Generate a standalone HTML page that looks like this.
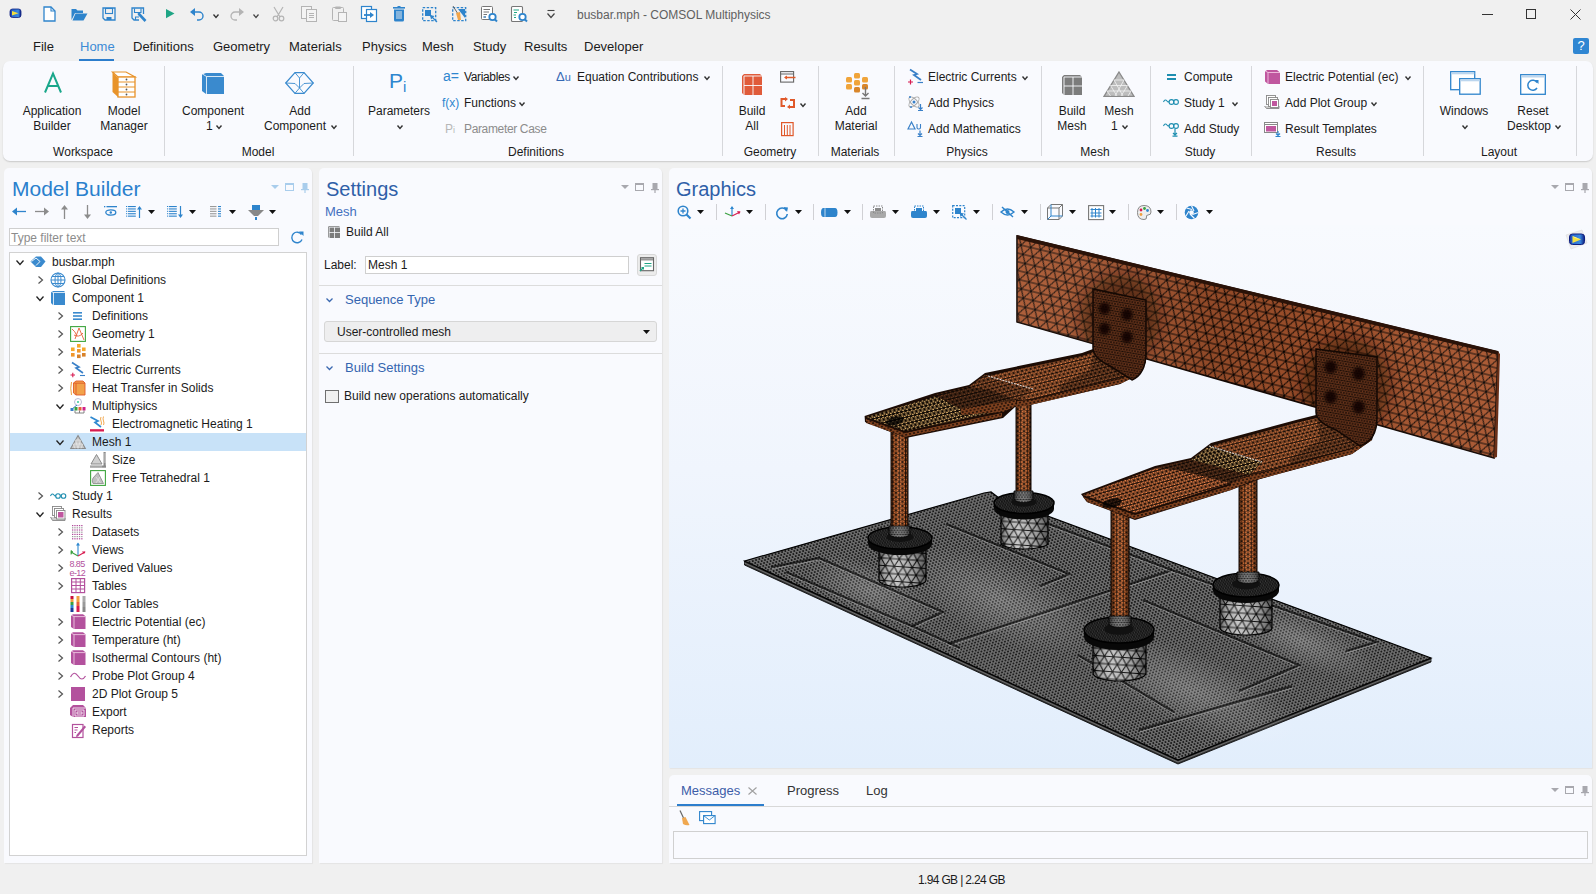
<!DOCTYPE html>
<html><head><meta charset="utf-8">
<style>
*{box-sizing:border-box;margin:0;padding:0}
html,body{width:1596px;height:894px;overflow:hidden;background:#f0f0f0;font-family:"Liberation Sans",sans-serif;color:#1b1b1b;font-size:12px}
.a{position:absolute;white-space:nowrap}
.panel{position:absolute;background:#f9fafe;border-radius:5px 5px 0 0;box-shadow:1px 1px 1px rgba(0,0,0,0.05)}
svg{position:absolute;overflow:visible}
</style></head><body>

<svg style="left:8px;top:8px" width="14" height="11" viewBox="0 0 14 11"><defs><linearGradient id="ag" x1="0" y1="0" x2="1" y2="0"><stop offset="0" stop-color="#1a2f9a"/><stop offset="0.25" stop-color="#2a6ad0"/><stop offset="0.75" stop-color="#3a8ae0"/><stop offset="1" stop-color="#0e1f80"/></linearGradient></defs><rect x="2" y="1" width="11" height="8.5" rx="2.5" fill="url(#ag)" stroke="#0e1f80" stroke-width="0.8"/><path d="M4 3 L10.5 5.3 L4 7.6 Z" fill="#f4e040"/></svg>
<svg style="left:43px;top:6px" width="13" height="16" viewBox="0 0 13 16"><path d="M1 1 H8 L12 5 V15 H1 Z" fill="#fff" stroke="#2e84cc" stroke-width="1.3"/><path d="M8 1 V5 H12" fill="none" stroke="#2e84cc" stroke-width="1.1"/></svg>
<svg style="left:71px;top:8px" width="17" height="13" viewBox="0 0 17 13"><path d="M0.5 1 H5 L6.5 2.5 H12 V5 H4 L0.5 12 Z" fill="#2e84cc"/><path d="M4.5 5.5 H16.5 L12.5 12.5 H1.5 Z" fill="#2e84cc"/></svg>
<svg style="left:102px;top:7px" width="14" height="14" viewBox="0 0 14 14"><path d="M1 1 H13 V13 H3 L1 11 Z" fill="none" stroke="#2e84cc" stroke-width="1.3"/><rect x="3.5" y="1.5" width="7" height="5" fill="none" stroke="#2e84cc" stroke-width="1.1"/><rect x="4.5" y="10" width="5" height="3" fill="#2e84cc"/></svg>
<svg style="left:131px;top:7px" width="16" height="16" viewBox="0 0 16 16"><path d="M12.5 7 V1 H1 V11 L3 13 H8" fill="none" stroke="#2e84cc" stroke-width="1.3"/><path d="M3.5 1.5 V5.5 H10 V1.5" fill="none" stroke="#2e84cc" stroke-width="1.1"/><path d="M4.5 13 V10 H8" fill="none" stroke="#2e84cc" stroke-width="1.1"/><path d="M7.5 6.5 L14.5 14" stroke="#2e84cc" stroke-width="2.6"/><path d="M6.5 5.5 L8.5 6.8 L7.2 8 Z" fill="#2e84cc"/></svg>
<svg style="left:166px;top:9px" width="9" height="10" viewBox="0 0 9 10"><path d="M0 0 L8.5 4.6 L0 9.2 Z" fill="#1fa585"/></svg>
<svg style="left:190px;top:8px" width="15" height="13" viewBox="0 0 15 13"><path d="M0 4 L5 0 V8 Z" fill="#2e84cc"/><path d="M4 4 H9 A4 4 0 0 1 9 12 H7" fill="none" stroke="#2e84cc" stroke-width="1.4"/></svg>
<svg style="left:213px;top:14px" width="6" height="4" viewBox="0 0 6 4"><path d="M0.5 0.5 L3.0 3.5 L5.5 0.5" fill="none" stroke="#333" stroke-width="1.3"/></svg>
<svg style="left:230px;top:8px" width="15" height="13" viewBox="0 0 15 13"><path d="M14 4 L9 0 V8 Z" fill="#b4b4b4"/><path d="M10 4 H5 A4 4 0 0 0 5 12 H7" fill="none" stroke="#b4b4b4" stroke-width="1.3"/></svg>
<svg style="left:253px;top:14px" width="6" height="4" viewBox="0 0 6 4"><path d="M0.5 0.5 L3.0 3.5 L5.5 0.5" fill="none" stroke="#444" stroke-width="1.2"/></svg>
<svg style="left:272px;top:6px" width="13" height="16" viewBox="0 0 13 16"><path d="M2 1 L8 11 M11 1 L5 11" stroke="#b4b4b4" stroke-width="1.2"/><circle cx="3.5" cy="12.5" r="2.3" fill="none" stroke="#b4b4b4" stroke-width="1.2"/><circle cx="9.5" cy="12.5" r="2.3" fill="none" stroke="#b4b4b4" stroke-width="1.2"/></svg>
<svg style="left:301px;top:6px" width="16" height="16" viewBox="0 0 16 16"><rect x="0.5" y="0.5" width="10" height="12" fill="#f4f4f4" stroke="#b4b4b4"/><rect x="5.5" y="3.5" width="10" height="12" fill="#f4f4f4" stroke="#b4b4b4"/><path d="M8 7.5 H13 M8 9.5 H13 M8 11.5 H13" stroke="#b4b4b4"/></svg>
<svg style="left:332px;top:6px" width="15" height="16" viewBox="0 0 15 16"><rect x="0.5" y="1.5" width="11" height="13" rx="1" fill="none" stroke="#b4b4b4"/><rect x="3" y="0.5" width="6" height="2.5" rx="1" fill="#b4b4b4"/><rect x="6.5" y="6.5" width="8" height="9" fill="#f4f4f4" stroke="#b4b4b4"/></svg>
<svg style="left:361px;top:6px" width="16" height="16" viewBox="0 0 16 16"><rect x="0.5" y="0.5" width="10" height="12" fill="#fff" stroke="#2e84cc" stroke-width="1.2"/><rect x="5.5" y="3.5" width="10" height="12" fill="#fff" stroke="#2e84cc" stroke-width="1.2"/><path d="M3 9 H10" stroke="#2e84cc" stroke-width="1.8"/><path d="M9 6 L13 9 L9 12 Z" fill="#2e84cc"/></svg>
<svg style="left:393px;top:6px" width="12" height="16" viewBox="0 0 12 16"><rect x="0" y="1" width="12" height="1.6" fill="#2e84cc"/><rect x="4.5" y="0" width="3" height="1.5" fill="#2e84cc"/><path d="M1 3.5 H11 V14 Q11 15.5 9.5 15.5 H2.5 Q1 15.5 1 14 Z" fill="#2e84cc"/><path d="M4 5 V13 M6 5 V13 M8 5 V13" stroke="#f0f0f0" stroke-width="0.9"/></svg>
<svg style="left:422px;top:7px" width="16" height="15" viewBox="0 0 16 15"><rect x="0.7" y="0.7" width="13" height="13" fill="none" stroke="#2e84cc" stroke-width="1.3" stroke-dasharray="2.5 1.5"/><rect x="3" y="3" width="6" height="6" fill="#2e84cc"/><path d="M8 8 L15 15" stroke="#2e84cc" stroke-width="1.3"/><path d="M8 8 L12.5 9 L9 12.5 Z" fill="#2e84cc"/></svg>
<svg style="left:452px;top:6px" width="15" height="16" viewBox="0 0 15 16"><rect x="0.7" y="1.7" width="13" height="13" fill="none" stroke="#2e84cc" stroke-width="1.3" stroke-dasharray="2.5 1.5"/><path d="M6 3 L13 3 L13 12 Z" fill="#2e84cc"/><path d="M1 0 L6 8" stroke="#666" stroke-width="1"/><path d="M4 7 L8 6 L9 14 L6 14 Z" fill="#f2a64a"/></svg>
<svg style="left:481px;top:6px" width="17" height="17" viewBox="0 0 17 17"><rect x="0.5" y="0.5" width="11" height="13" rx="1" fill="#fff" stroke="#777"/><path d="M2.5 3.5 H9 M2.5 6 H8 M2.5 8.5 H6 M2.5 11 H5" stroke="#777"/><path d="M2.5 11 H5" stroke="#2e84cc"/><circle cx="11.5" cy="11" r="3.2" fill="#fff" stroke="#2e84cc" stroke-width="1.8"/><path d="M13.5 13 L16 15.5" stroke="#2e84cc" stroke-width="2"/></svg>
<svg style="left:511px;top:6px" width="17" height="17" viewBox="0 0 17 17"><rect x="0.5" y="0.5" width="11" height="15" rx="1" fill="#fff" stroke="#777" stroke-width="1.1"/><path d="M2.5 4 H8 " stroke="#1fa585"/><path d="M3 6.5 H6 M2.5 9 H5 M3 11.5 H5" stroke="#1fa585"/><circle cx="11.5" cy="11" r="3.2" fill="#fff" stroke="#2e84cc" stroke-width="1.8"/><path d="M13.5 13 L16 15.5" stroke="#2e84cc" stroke-width="2"/></svg>
<svg style="left:547px;top:10px" width="8" height="9" viewBox="0 0 8 9"><path d="M0.5 0.5 H7.5" stroke="#444" stroke-width="1.1"/><path d="M0.5 3.5 L4 7.5 L7.5 3.5" fill="none" stroke="#444" stroke-width="1.2"/></svg>
<div class="a" style="left:577px;top:7px;font-size:12px;line-height:16px;color:#606060;">busbar.mph - COMSOL Multiphysics</div>
<div class="a" style="left:1482px;top:14px;width:11px;height:1px;background:#333;"></div>
<div class="a" style="left:1526px;top:9px;width:10px;height:10px;border:1px solid #333"></div>
<svg style="left:1570px;top:9px" width="11" height="11" viewBox="0 0 11 11"><path d="M0.5 0.5 L10.5 10.5 M10.5 0.5 L0.5 10.5" stroke="#333" stroke-width="1"/></svg>
<div class="a" style="left:33px;top:39px;font-size:13px;line-height:16px;color:#1b1b1b;">File</div>
<div class="a" style="left:133px;top:39px;font-size:13px;line-height:16px;color:#1b1b1b;">Definitions</div>
<div class="a" style="left:213px;top:39px;font-size:13px;line-height:16px;color:#1b1b1b;">Geometry</div>
<div class="a" style="left:289px;top:39px;font-size:13px;line-height:16px;color:#1b1b1b;">Materials</div>
<div class="a" style="left:362px;top:39px;font-size:13px;line-height:16px;color:#1b1b1b;">Physics</div>
<div class="a" style="left:422px;top:39px;font-size:13px;line-height:16px;color:#1b1b1b;">Mesh</div>
<div class="a" style="left:473px;top:39px;font-size:13px;line-height:16px;color:#1b1b1b;">Study</div>
<div class="a" style="left:524px;top:39px;font-size:13px;line-height:16px;color:#1b1b1b;">Results</div>
<div class="a" style="left:584px;top:39px;font-size:13px;line-height:16px;color:#1b1b1b;">Developer</div>
<div class="a" style="left:80px;top:39px;font-size:13px;line-height:16px;color:#3c8bd6;">Home</div>
<div class="a" style="left:79px;top:59px;width:35px;height:3px;background:#2d7ecd;"></div>
<div class="a" style="left:1573px;top:38px;width:16px;height:16px;background:#2f86d2;border-radius:2px;color:#fff;font-size:13px;line-height:16px;text-align:center">?</div>
<div class="a" style="left:3px;top:61px;width:1590px;height:100px;background:#f9fafe;border-radius:7px;box-shadow:0 1px 1.5px rgba(0,0,0,0.16)"></div>
<div class="a" style="left:164px;top:66px;width:1px;height:90px;background:#d6d7db;"></div>
<div class="a" style="left:353px;top:66px;width:1px;height:90px;background:#d6d7db;"></div>
<div class="a" style="left:722px;top:66px;width:1px;height:90px;background:#d6d7db;"></div>
<div class="a" style="left:818px;top:66px;width:1px;height:90px;background:#d6d7db;"></div>
<div class="a" style="left:894px;top:66px;width:1px;height:90px;background:#d6d7db;"></div>
<div class="a" style="left:1041px;top:66px;width:1px;height:90px;background:#d6d7db;"></div>
<div class="a" style="left:1150px;top:66px;width:1px;height:90px;background:#d6d7db;"></div>
<div class="a" style="left:1251px;top:66px;width:1px;height:90px;background:#d6d7db;"></div>
<div class="a" style="left:1423px;top:66px;width:1px;height:90px;background:#d6d7db;"></div>
<div class="a" style="left:1576px;top:66px;width:1px;height:90px;background:#d6d7db;"></div>
<svg style="left:44px;top:73px" width="18" height="20" viewBox="0 0 18 20"><path d="M1 19.5 L9 0.5 L17 19.5 M4 13 H14" fill="none" stroke="#1aa78b" stroke-width="2"/></svg>
<svg style="left:112px;top:71px" width="24" height="27" viewBox="0 0 24 27"><path d="M0.5 1 L6 7 V26 L0.5 21 Z" fill="#e8932a"/><path d="M0.5 1 H14 L23 6 H6 Z" fill="#fff" stroke="#e8932a" stroke-width="1.2"/><rect x="6" y="6" width="17" height="20" fill="#fff" stroke="#e8932a" stroke-width="1.3"/><path d="M6 11 H23 M6 16 H23 M6 21 H23" stroke="#e8932a" stroke-width="1.2"/><circle cx="14.5" cy="8.5" r="0.9" fill="#555"/><circle cx="14.5" cy="13.5" r="0.9" fill="#555"/><circle cx="14.5" cy="18.5" r="0.9" fill="#555"/><circle cx="14.5" cy="23.5" r="0.9" fill="#555"/></svg>
<div class="a" style="left:-48px;width:200px;text-align:center;top:103px;font-size:12px;line-height:16px;">Application</div>
<div class="a" style="left:-48px;width:200px;text-align:center;top:118px;font-size:12px;line-height:16px;">Builder</div>
<div class="a" style="left:24px;width:200px;text-align:center;top:103px;font-size:12px;line-height:16px;">Model</div>
<div class="a" style="left:24px;width:200px;text-align:center;top:118px;font-size:12px;line-height:16px;">Manager</div>
<div class="a" style="left:-17px;width:200px;text-align:center;top:144px;font-size:12px;line-height:16px;">Workspace</div>
<svg style="left:202px;top:73px" width="22" height="21" viewBox="0 0 22 21"><path d="M0 1.5 L4 0 H19 L22 3 V21 H4 L0 18 Z" fill="#3a8ace"/><path d="M4.5 21 V3.5 H22 M0.5 1 L4.5 3.5" fill="none" stroke="#fff" stroke-width="0.8"/></svg>
<svg style="left:285px;top:72px" width="29" height="22" viewBox="0 0 29 22"><g fill="none" stroke="#3a8ace" stroke-width="1.2"><path d="M0.7 11 L10 0.7 H19 L28.3 11 L19 21.3 H10 Z"/><path d="M10 0.7 L14.5 6 L19 0.7 M14.5 6 V16 M0.7 11 L10 11.5 L14.5 16 L19 11.5 L28.3 11 M10 21.3 L14.5 16 L19 21.3" stroke-width="0.9"/></g></svg>
<div class="a" style="left:113px;width:200px;text-align:center;top:103px;font-size:12px;line-height:16px;">Component</div>
<div class="a" style="left:206px;top:118px;font-size:12px;line-height:16px;">1</div>
<svg style="left:216px;top:125px" width="6" height="4" viewBox="0 0 6 4"><path d="M0.5 0.5 L3.0 3.5 L5.5 0.5" fill="none" stroke="#333" stroke-width="1.4"/></svg>
<div class="a" style="left:200px;width:200px;text-align:center;top:103px;font-size:12px;line-height:16px;">Add</div>
<div class="a" style="left:264px;top:118px;font-size:12px;line-height:16px;">Component</div>
<svg style="left:331px;top:125px" width="6" height="4" viewBox="0 0 6 4"><path d="M0.5 0.5 L3.0 3.5 L5.5 0.5" fill="none" stroke="#333" stroke-width="1.4"/></svg>
<div class="a" style="left:158px;width:200px;text-align:center;top:144px;font-size:12px;line-height:16px;">Model</div>
<div class="a" style="left:389px;top:66px;font-size:21px;line-height:16px;color:#2e86cf;line-height:30px">P<span style="font-size:15px;vertical-align:-4px">i</span></div>
<div class="a" style="left:299px;width:200px;text-align:center;top:103px;font-size:12px;line-height:16px;">Parameters</div>
<svg style="left:397px;top:125px" width="6" height="4" viewBox="0 0 6 4"><path d="M0.5 0.5 L3.0 3.5 L5.5 0.5" fill="none" stroke="#333" stroke-width="1.4"/></svg>
<div class="a" style="left:443px;top:66px;font-size:14px;line-height:16px;color:#2e86cf;line-height:20px">a=</div>
<div class="a" style="left:464px;top:69px;font-size:12px;line-height:16px;letter-spacing:-0.35px">Variables</div>
<svg style="left:513px;top:76px" width="6" height="4" viewBox="0 0 6 4"><path d="M0.5 0.5 L3.0 3.5 L5.5 0.5" fill="none" stroke="#333" stroke-width="1.4"/></svg>
<div class="a" style="left:442px;top:95px;font-size:12px;line-height:16px;color:#2e86cf;line-height:17px">f(x)</div>
<div class="a" style="left:464px;top:95px;font-size:12px;line-height:16px;">Functions</div>
<svg style="left:519px;top:102px" width="6" height="4" viewBox="0 0 6 4"><path d="M0.5 0.5 L3.0 3.5 L5.5 0.5" fill="none" stroke="#333" stroke-width="1.4"/></svg>
<div class="a" style="left:445px;top:121px;font-size:12px;line-height:16px;color:#b7b7b7;">P<span style="font-size:9px">i</span></div>
<div class="a" style="left:464px;top:121px;font-size:12px;line-height:16px;color:#8c8c8c;letter-spacing:-0.35px">Parameter Case</div>
<div class="a" style="left:556px;top:68px;font-size:13px;line-height:16px;color:#3568b4;line-height:18px">&#916;<span style="font-size:11px">u</span></div>
<div class="a" style="left:577px;top:69px;font-size:12px;line-height:16px;">Equation Contributions</div>
<svg style="left:704px;top:76px" width="6" height="4" viewBox="0 0 6 4"><path d="M0.5 0.5 L3.0 3.5 L5.5 0.5" fill="none" stroke="#333" stroke-width="1.4"/></svg>
<div class="a" style="left:436px;width:200px;text-align:center;top:144px;font-size:12px;line-height:16px;">Definitions</div>
<svg style="left:742px;top:74px" width="20" height="21" viewBox="0 0 20 21"><path d="M0 2 L2 0 H18 L20 2 V21 H2 L0 19 Z" fill="#e05b3a"/><path d="M2 21 V2 H20 M11 2 V21 M2 11.5 H20" fill="none" stroke="#f9fafe" stroke-width="0.9"/></svg>
<div class="a" style="left:652px;width:200px;text-align:center;top:103px;font-size:12px;line-height:16px;">Build</div>
<div class="a" style="left:652px;width:200px;text-align:center;top:118px;font-size:12px;line-height:16px;">All</div>
<svg style="left:780px;top:71px" width="16" height="12" viewBox="0 0 16 12"><rect x="0.6" y="0.6" width="13" height="10.5" fill="none" stroke="#666" stroke-width="1.1"/><path d="M0.6 3 H13.6" stroke="#666"/><path d="M5 6.5 H15.5" stroke="#e05b2a" stroke-width="1.5"/><path d="M4 6.5 L7 4.5 V8.5 Z" fill="#e05b2a"/></svg>
<svg style="left:780px;top:97px" width="16" height="12" viewBox="0 0 16 12"><path d="M5 2 H1.5 V9 H5 M10 10 H14 V3 H10" fill="none" stroke="#e0582a" stroke-width="2"/><path d="M5 0 L8 2 L5 4.5 Z M10 7.5 L7 10 L10 12 Z" fill="#e0582a"/></svg>
<svg style="left:800px;top:103px" width="6" height="4" viewBox="0 0 6 4"><path d="M0.5 0.5 L3.0 3.5 L5.5 0.5" fill="none" stroke="#333" stroke-width="1.4"/></svg>
<svg style="left:781px;top:122px" width="13" height="14" viewBox="0 0 13 14"><rect x="0.6" y="0.6" width="11.5" height="13" fill="none" stroke="#e0582a" stroke-width="1.2"/><path d="M3.5 3 V13.5 M6.3 3 V13.5 M9 3 V13.5" stroke="#e0582a" stroke-width="1"/></svg>
<div class="a" style="left:670px;width:200px;text-align:center;top:144px;font-size:12px;line-height:16px;">Geometry</div>
<svg style="left:845px;top:73px" width="26" height="27" viewBox="0 0 26 27"><g><rect x="9" y="0" width="6" height="5.5" rx="1.5" fill="#f0a43a"/><rect x="1" y="4" width="6" height="5.5" rx="1.5" fill="#f0a43a"/><rect x="9" y="7" width="6" height="5.5" rx="1.5" fill="#f0a43a"/><rect x="17" y="4" width="6" height="5.5" rx="1.5" fill="#f0a43a"/><rect x="1" y="11" width="6" height="5.5" rx="1.5" fill="#f0a43a"/><rect x="9" y="14" width="6" height="5.5" rx="1.5" fill="#d9862a"/><rect x="17" y="11" width="6" height="5.5" rx="1.5" fill="#d9862a"/></g><path d="M20.5 14 V23 M17.5 20 L20.5 23 L23.5 20 M16.5 25.5 H24.5" fill="none" stroke="#777" stroke-width="1.4"/></svg>
<div class="a" style="left:756px;width:200px;text-align:center;top:103px;font-size:12px;line-height:16px;">Add</div>
<div class="a" style="left:756px;width:200px;text-align:center;top:118px;font-size:12px;line-height:16px;">Material</div>
<div class="a" style="left:755px;width:200px;text-align:center;top:144px;font-size:12px;line-height:16px;">Materials</div>
<svg style="left:907px;top:69px" width="17" height="16" viewBox="0 0 17 16"><path d="M3 0.5 L10 5 L7 6 L14 11" fill="none" stroke="#3a80c8" stroke-width="1.8"/><path d="M1 13 H6 M3.5 10.5 V15.5" stroke="#d81b50" stroke-width="1.2"/><path d="M10.5 13.5 H16" stroke="#3a80c8" stroke-width="1.2"/></svg>
<div class="a" style="left:928px;top:69px;font-size:12px;line-height:16px;">Electric Currents</div>
<svg style="left:1022px;top:76px" width="6" height="4" viewBox="0 0 6 4"><path d="M0.5 0.5 L3.0 3.5 L5.5 0.5" fill="none" stroke="#333" stroke-width="1.4"/></svg>
<svg style="left:907px;top:95px" width="17" height="16" viewBox="0 0 17 16"><ellipse cx="7" cy="7" rx="6.5" ry="3" fill="none" stroke="#aaa" stroke-width="1" transform="rotate(45 7 7)"/><ellipse cx="7" cy="7" rx="6.5" ry="3" fill="none" stroke="#aaa" stroke-width="1" transform="rotate(-45 7 7)"/><circle cx="7" cy="7" r="1.5" fill="#3a80c8"/><circle cx="3" cy="2" r="1" fill="#3a80c8"/><circle cx="4" cy="12" r="1" fill="#3a80c8"/><path d="M13.5 9 V14.5 M11.5 12.5 L13.5 14.5 L15.5 12.5 M11 15.5 H16" fill="none" stroke="#3a80c8" stroke-width="1.2"/></svg>
<div class="a" style="left:928px;top:95px;font-size:12px;line-height:16px;">Add Physics</div>
<svg style="left:907px;top:121px" width="17" height="16" viewBox="0 0 17 16"><path d="M1 8 L4.5 1 L8 8 Z" fill="none" stroke="#3a80c8" stroke-width="1.2"/><path d="M10 3 V6.5 Q10 8 11.5 8 H12 Q13.5 8 13.5 6.5 V3" fill="none" stroke="#3a80c8" stroke-width="1.1"/><path d="M13 9.5 V14.5 M11 12.5 L13 14.5 L15 12.5 M10.5 15.5 H15.5" fill="none" stroke="#3a80c8" stroke-width="1.2"/></svg>
<div class="a" style="left:928px;top:121px;font-size:12px;line-height:16px;">Add Mathematics</div>
<div class="a" style="left:867px;width:200px;text-align:center;top:144px;font-size:12px;line-height:16px;">Physics</div>
<svg style="left:1062px;top:75px" width="20" height="20" viewBox="0 0 20 20"><path d="M0 2 L2 0 H18 L20 2 V20 H2 L0 18 Z" fill="#7c7c7c"/><path d="M2 20 V2 H20 M11 2 V20 M2 11 H20" fill="none" stroke="#f9fafe" stroke-width="0.9"/></svg>
<svg style="left:1103px;top:71px" width="32" height="26" viewBox="0 0 32 26"><path d="M16 1 L31 25.3 H1 Z" fill="#bdbdbd" stroke="#8a8a8a" stroke-width="1.3"/><g stroke="#f4f4f4" stroke-width="0.8" fill="none"><path d="M11 9 H21 M7.5 14.5 H24.5 M4 20 H28 M11 9 L20 25 M7.5 14.5 L14 25 M4 20 L7.5 25 M21 9 L12 25 M24.5 14.5 L18 25 M28 20 L25 25"/></g></svg>
<div class="a" style="left:972px;width:200px;text-align:center;top:103px;font-size:12px;line-height:16px;">Build</div>
<div class="a" style="left:972px;width:200px;text-align:center;top:118px;font-size:12px;line-height:16px;">Mesh</div>
<div class="a" style="left:1019px;width:200px;text-align:center;top:103px;font-size:12px;line-height:16px;">Mesh</div>
<div class="a" style="left:1111px;top:118px;font-size:12px;line-height:16px;">1</div>
<svg style="left:1122px;top:125px" width="6" height="4" viewBox="0 0 6 4"><path d="M0.5 0.5 L3.0 3.5 L5.5 0.5" fill="none" stroke="#333" stroke-width="1.4"/></svg>
<div class="a" style="left:995px;width:200px;text-align:center;top:144px;font-size:12px;line-height:16px;">Mesh</div>
<svg style="left:1167px;top:74px" width="9" height="6" viewBox="0 0 9 6"><rect x="0" y="0" width="9" height="2" fill="#1e8eb0"/><rect x="0" y="4" width="9" height="2" fill="#1e8eb0"/></svg>
<div class="a" style="left:1184px;top:69px;font-size:12px;line-height:16px;">Compute</div>
<svg style="left:1163px;top:98px" width="16" height="8" viewBox="0 0 16 8"><path d="M0.5 4 Q2 0.5 4 3 Q5 4.5 6 3.5" fill="none" stroke="#1e8eb0" stroke-width="1.1"/><circle cx="8.5" cy="4" r="2.4" fill="none" stroke="#1e8eb0" stroke-width="1.1"/><circle cx="13" cy="4" r="2.4" fill="none" stroke="#1e8eb0" stroke-width="1.1"/></svg>
<div class="a" style="left:1184px;top:95px;font-size:12px;line-height:16px;">Study 1</div>
<svg style="left:1232px;top:102px" width="6" height="4" viewBox="0 0 6 4"><path d="M0.5 0.5 L3.0 3.5 L5.5 0.5" fill="none" stroke="#333" stroke-width="1.4"/></svg>
<svg style="left:1163px;top:122px" width="16" height="15" viewBox="0 0 16 15"><path d="M0.5 4 Q2 0.5 4 3 Q5 4.5 6 3.5" fill="none" stroke="#1e8eb0" stroke-width="1.1"/><circle cx="8.5" cy="4" r="2.4" fill="none" stroke="#1e8eb0" stroke-width="1.1"/><circle cx="13" cy="4" r="2.4" fill="none" stroke="#1e8eb0" stroke-width="1.1"/><path d="M12 7 V13 M10 11 L12 13 L14 11 M9.5 14.2 H14.5" fill="none" stroke="#1e8eb0" stroke-width="1.2"/></svg>
<div class="a" style="left:1184px;top:121px;font-size:12px;line-height:16px;">Add Study</div>
<div class="a" style="left:1100px;width:200px;text-align:center;top:144px;font-size:12px;line-height:16px;">Study</div>
<svg style="left:1265px;top:70px" width="15" height="14" viewBox="0 0 15 14"><path d="M0 1.5 L2 0 H12 L15 2.5 V14 H3 L0 11.5 Z" fill="#c0579f"/><path d="M3 14 V2.5 H15 M0.3 1 L3 2.5" fill="none" stroke="#f7d0ea" stroke-width="0.8"/></svg>
<div class="a" style="left:1285px;top:69px;font-size:12px;line-height:16px;">Electric Potential (ec)</div>
<svg style="left:1405px;top:76px" width="6" height="4" viewBox="0 0 6 4"><path d="M0.5 0.5 L3.0 3.5 L5.5 0.5" fill="none" stroke="#333" stroke-width="1.4"/></svg>
<svg style="left:1264px;top:95px" width="16" height="15" viewBox="0 0 16 15"><path d="M0.5 11 L2.5 13.5 H15 V11" fill="#ccc" stroke="#888" stroke-width="0.9"/><rect x="2.5" y="0.5" width="9" height="9" fill="#fff" stroke="#888" stroke-width="0.9"/><rect x="4.5" y="2.5" width="9" height="9" fill="#fff" stroke="#888" stroke-width="0.9"/><rect x="6.5" y="4.5" width="8" height="8" fill="#fff" stroke="#888" stroke-width="0.9"/><rect x="8" y="6" width="5" height="5" fill="#c0579f"/></svg>
<div class="a" style="left:1285px;top:95px;font-size:12px;line-height:16px;">Add Plot Group</div>
<svg style="left:1371px;top:102px" width="6" height="4" viewBox="0 0 6 4"><path d="M0.5 0.5 L3.0 3.5 L5.5 0.5" fill="none" stroke="#333" stroke-width="1.4"/></svg>
<svg style="left:1264px;top:122px" width="17" height="15" viewBox="0 0 17 15"><rect x="0.5" y="0.5" width="13" height="10" fill="#fff" stroke="#888" stroke-width="1"/><path d="M0.5 2.5 H13.5" stroke="#888"/><rect x="2" y="4" width="10" height="5.5" fill="#c0579f"/><path d="M14 9 V13.5 M12 11.5 L14 13.5 L16 11.5 M11.5 14.5 H16.5" fill="none" stroke="#2e84cc" stroke-width="1.1"/></svg>
<div class="a" style="left:1285px;top:121px;font-size:12px;line-height:16px;">Result Templates</div>
<div class="a" style="left:1236px;width:200px;text-align:center;top:144px;font-size:12px;line-height:16px;">Results</div>
<svg style="left:1450px;top:71px" width="31" height="24" viewBox="0 0 31 24"><rect x="0.7" y="0.7" width="24" height="18" fill="#fff" stroke="#2e84cc" stroke-width="1.3"/><rect x="1.3" y="1.3" width="23" height="2" fill="#bcd6ee"/><rect x="9.7" y="7.7" width="20.5" height="15.5" fill="#fff" stroke="#2e84cc" stroke-width="1.3"/><rect x="10.3" y="8.3" width="19.5" height="2" fill="#bcd6ee"/></svg>
<div class="a" style="left:1364px;width:200px;text-align:center;top:103px;font-size:12px;line-height:16px;">Windows</div>
<svg style="left:1462px;top:125px" width="6" height="4" viewBox="0 0 6 4"><path d="M0.5 0.5 L3.0 3.5 L5.5 0.5" fill="none" stroke="#333" stroke-width="1.4"/></svg>
<svg style="left:1520px;top:74px" width="26" height="21" viewBox="0 0 26 21"><rect x="0.7" y="0.7" width="24.6" height="19.6" fill="#fff" stroke="#2e84cc" stroke-width="1.3"/><rect x="1.3" y="1.3" width="23.4" height="2.2" fill="#bcd6ee"/><path d="M17 8.5 A5 5 0 1 0 17 14" fill="none" stroke="#2e84cc" stroke-width="1.5"/><path d="M14.5 6 L18.5 6 L18.5 10 Z" fill="#2e84cc"/></svg>
<div class="a" style="left:1433px;width:200px;text-align:center;top:103px;font-size:12px;line-height:16px;">Reset</div>
<div class="a" style="left:1507px;top:118px;font-size:12px;line-height:16px;">Desktop</div>
<svg style="left:1555px;top:125px" width="6" height="4" viewBox="0 0 6 4"><path d="M0.5 0.5 L3.0 3.5 L5.5 0.5" fill="none" stroke="#333" stroke-width="1.4"/></svg>
<div class="a" style="left:1399px;width:200px;text-align:center;top:144px;font-size:12px;line-height:16px;">Layout</div>
<div class="panel" style="left:4px;top:168px;width:308px;height:695px"></div>
<div class="panel" style="left:319px;top:168px;width:343px;height:695px"></div>
<div class="panel" style="left:669px;top:168px;width:923px;height:600px"></div>
<div class="panel" style="left:669px;top:775px;width:923px;height:88px"></div>
<div class="a" style="left:12px;top:177px;font-size:21px;line-height:16px;color:#2a80cd;line-height:24px">Model Builder</div>
<svg style="left:271px;top:185px" width="8" height="4" viewBox="0 0 8 4"><path d="M0 0 L8 0 L4.0 4 Z" fill="#a9cdec"/></svg>
<div class="a" style="left:285px;top:183px;width:9px;height:8px;border:1.3px solid #a9cdec;border-top-width:2px"></div>
<svg style="left:301px;top:182.5px" width="8" height="10" viewBox="0 0 8 10"><rect x="1.5" y="0" width="5" height="6" fill="#a9cdec"/><rect x="0" y="6" width="8" height="1.2" fill="#a9cdec"/><rect x="3.4" y="6" width="1.2" height="4" fill="#a9cdec"/></svg>
<svg style="left:12px;top:207px" width="14" height="9" viewBox="0 0 14 9"><path d="M0 4.5 L5 0.5 V8.5 Z" fill="#2e84cc"/><path d="M4 4.5 H14" stroke="#2e84cc" stroke-width="1.3"/></svg>
<svg style="left:35px;top:207px" width="14" height="9" viewBox="0 0 14 9"><path d="M14 4.5 L9 0.5 V8.5 Z" fill="#8c8c8c"/><path d="M0 4.5 H10" stroke="#8c8c8c" stroke-width="1.3"/></svg>
<svg style="left:61px;top:205px" width="7" height="14" viewBox="0 0 7 14"><path d="M3.5 0 L7 4.5 H0 Z" fill="#8c8c8c"/><path d="M3.5 4 V14" stroke="#8c8c8c" stroke-width="1.3"/></svg>
<svg style="left:84px;top:205px" width="7" height="14" viewBox="0 0 7 14"><path d="M3.5 14 L7 9.5 H0 Z" fill="#8c8c8c"/><path d="M3.5 0 V10" stroke="#8c8c8c" stroke-width="1.3"/></svg>
<svg style="left:104px;top:206px" width="13" height="10" viewBox="0 0 13 10"><rect x="0" y="0" width="1.3" height="1.3" fill="#2e84cc"/><rect x="2.5" y="0" width="10.5" height="1.3" fill="#2e84cc"/><ellipse cx="6.8" cy="6.5" rx="5" ry="2.6" fill="none" stroke="#2e84cc" stroke-width="1.3"/><circle cx="6.8" cy="6.5" r="1.2" fill="#2e84cc"/></svg>
<svg style="left:126px;top:206px" width="16" height="12" viewBox="0 0 16 12"><rect x="0" y="0.0" width="1" height="1" fill="#2e84cc"/><rect x="1.8" y="0.0" width="8" height="1.1" fill="#2e84cc"/><rect x="0" y="2.4" width="1" height="1" fill="#2e84cc"/><rect x="1.8" y="2.4" width="8" height="1.1" fill="#2e84cc"/><rect x="0" y="4.8" width="1" height="1" fill="#2e84cc"/><rect x="1.8" y="4.8" width="8" height="1.1" fill="#2e84cc"/><rect x="0" y="7.199999999999999" width="1" height="1" fill="#2e84cc"/><rect x="1.8" y="7.199999999999999" width="8" height="1.1" fill="#2e84cc"/><rect x="0" y="9.6" width="1" height="1" fill="#2e84cc"/><rect x="1.8" y="9.6" width="8" height="1.1" fill="#2e84cc"/><path d="M13.5 12 V1.5" stroke="#2e84cc" stroke-width="1.2"/><path d="M11 3.5 L13.5 0 L16 3.5 Z" fill="#2e84cc"/></svg>
<svg style="left:148px;top:210px" width="7" height="4" viewBox="0 0 7 4"><path d="M0 0 L7 0 L3.5 4 Z" fill="#111"/></svg>
<svg style="left:167px;top:206px" width="16" height="12" viewBox="0 0 16 12"><rect x="0" y="0.0" width="1" height="1" fill="#2e84cc"/><rect x="1.8" y="0.0" width="8" height="1.1" fill="#2e84cc"/><rect x="0" y="2.4" width="1" height="1" fill="#2e84cc"/><rect x="1.8" y="2.4" width="8" height="1.1" fill="#2e84cc"/><rect x="0" y="4.8" width="1" height="1" fill="#2e84cc"/><rect x="1.8" y="4.8" width="8" height="1.1" fill="#2e84cc"/><rect x="0" y="7.199999999999999" width="1" height="1" fill="#2e84cc"/><rect x="1.8" y="7.199999999999999" width="8" height="1.1" fill="#2e84cc"/><rect x="0" y="9.6" width="1" height="1" fill="#2e84cc"/><rect x="1.8" y="9.6" width="8" height="1.1" fill="#2e84cc"/><path d="M13.5 0 V10.5" stroke="#2e84cc" stroke-width="1.2"/><path d="M11 8.5 L13.5 12 L16 8.5 Z" fill="#2e84cc"/></svg>
<svg style="left:189px;top:210px" width="7" height="4" viewBox="0 0 7 4"><path d="M0 0 L7 0 L3.5 4 Z" fill="#111"/></svg>
<svg style="left:210px;top:206px" width="11" height="12" viewBox="0 0 11 12"><rect x="0" y="0.0" width="6.5" height="1.1" fill="#999"/><rect x="8" y="0.0" width="3" height="1.1" fill="#2e84cc"/><rect x="0" y="2.4" width="6.5" height="1.1" fill="#999"/><rect x="8" y="2.4" width="3" height="1.1" fill="#2e84cc"/><rect x="0" y="4.8" width="6.5" height="1.1" fill="#999"/><rect x="8" y="4.8" width="3" height="1.1" fill="#2e84cc"/><rect x="0" y="7.199999999999999" width="6.5" height="1.1" fill="#999"/><rect x="8" y="7.199999999999999" width="3" height="1.1" fill="#2e84cc"/><rect x="0" y="9.6" width="6.5" height="1.1" fill="#999"/><rect x="8" y="9.6" width="3" height="1.1" fill="#2e84cc"/></svg>
<svg style="left:229px;top:210px" width="7" height="4" viewBox="0 0 7 4"><path d="M0 0 L7 0 L3.5 4 Z" fill="#111"/></svg>
<svg style="left:248px;top:205px" width="16" height="15" viewBox="0 0 16 15"><rect x="4" y="0" width="8" height="5" fill="#2e84cc"/><path d="M0 5 H16 L10 11 H6 Z" fill="#888"/><rect x="7" y="12" width="2" height="3" fill="#2e84cc"/></svg>
<svg style="left:269px;top:210px" width="7" height="4" viewBox="0 0 7 4"><path d="M0 0 L7 0 L3.5 4 Z" fill="#111"/></svg>
<div class="a" style="left:9px;top:228px;width:270px;height:18px;background:#fff;border:1px solid #cfcfcf"></div>
<div class="a" style="left:11px;top:230px;font-size:12px;line-height:16px;color:#8c8c8c;">Type filter text</div>
<svg style="left:290px;top:231px" width="14" height="13" viewBox="0 0 14 13"><path d="M11.5 3.5 A5.3 5.3 0 1 0 12 8.5" fill="none" stroke="#2e84cc" stroke-width="1.4"/><path d="M9 0.5 H13.5 V5 Z" fill="#2e84cc"/></svg>
<div class="a" style="left:9px;top:252px;width:298px;height:604px;background:#fff;border:1px solid #d2d2d2"></div>
<div class="a" style="left:10px;top:433px;width:296px;height:18px;background:#c8e2f8;"></div>
<svg style="left:16px;top:260px" width="8" height="5" viewBox="0 0 8 5"><path d="M0.5 0.5 L4.0 4.5 L7.5 0.5" fill="none" stroke="#222" stroke-width="1.3"/></svg>
<svg style="left:30px;top:254px" width="16" height="16" viewBox="0 0 16 16"><path d="M0.5 7.5 L6 2.5 H11 L15.5 7.5 L11 13 H6 Z" fill="#3a8ace"/><path d="M1.5 7.5 L6 4 L10 7.5 L6 11.5" fill="none" stroke="#fff" stroke-width="0.9"/></svg>
<div class="a" style="left:52px;top:253px;font-size:12px;line-height:16px;color:#1b1b1b;line-height:18px;top:253px">busbar.mph</div>
<svg style="left:38px;top:276px" width="5" height="8" viewBox="0 0 5 8"><path d="M0.5 0.5 L4.5 4.0 L0.5 7.5" fill="none" stroke="#555" stroke-width="1.2"/></svg>
<svg style="left:50px;top:272px" width="16" height="16" viewBox="0 0 16 16"><circle cx="8" cy="8" r="7" fill="none" stroke="#3a8ace" stroke-width="1.1"/><ellipse cx="8" cy="8" rx="3" ry="7" fill="none" stroke="#3a8ace" stroke-width="1"/><path d="M1 8 H15 M2 4.5 H14 M2 11.5 H14 M8 1 V15" stroke="#3a8ace" stroke-width="1"/></svg>
<div class="a" style="left:72px;top:271px;font-size:12px;line-height:16px;color:#1b1b1b;line-height:18px;top:271px">Global Definitions</div>
<svg style="left:36px;top:296px" width="8" height="5" viewBox="0 0 8 5"><path d="M0.5 0.5 L4.0 4.5 L7.5 0.5" fill="none" stroke="#222" stroke-width="1.3"/></svg>
<svg style="left:50px;top:290px" width="16" height="16" viewBox="0 0 16 16"><path d="M1 2 L3 1 H14 L15 2 V15 H3 L1 13 Z" fill="#3a8ace"/><path d="M3.5 15 V2.5 H15 M1 1.5 L3.5 2.5" fill="none" stroke="#fff" stroke-width="0.8"/></svg>
<div class="a" style="left:72px;top:289px;font-size:12px;line-height:16px;color:#1b1b1b;line-height:18px;top:289px">Component 1</div>
<svg style="left:58px;top:312px" width="5" height="8" viewBox="0 0 5 8"><path d="M0.5 0.5 L4.5 4.0 L0.5 7.5" fill="none" stroke="#555" stroke-width="1.2"/></svg>
<svg style="left:70px;top:308px" width="16" height="16" viewBox="0 0 16 16"><rect x="3" y="4" width="9" height="1.6" fill="#3a8ace"/><rect x="3" y="7.2" width="9" height="1.6" fill="#3a8ace"/><rect x="3" y="10.4" width="9" height="1.6" fill="#3a8ace"/></svg>
<div class="a" style="left:92px;top:307px;font-size:12px;line-height:16px;color:#1b1b1b;line-height:18px;top:307px">Definitions</div>
<svg style="left:58px;top:330px" width="5" height="8" viewBox="0 0 5 8"><path d="M0.5 0.5 L4.5 4.0 L0.5 7.5" fill="none" stroke="#555" stroke-width="1.2"/></svg>
<svg style="left:70px;top:326px" width="16" height="16" viewBox="0 0 16 16"><rect x="0.6" y="0.6" width="14.8" height="14.8" fill="#fff" stroke="#3ea53e" stroke-width="1.1"/><path d="M2 3 Q5 5 7 10 M5 13 L9 2 L14 14 M4 9 Q9 12 13 7" fill="none" stroke="#e8603a" stroke-width="0.9"/></svg>
<div class="a" style="left:92px;top:325px;font-size:12px;line-height:16px;color:#1b1b1b;line-height:18px;top:325px">Geometry 1</div>
<svg style="left:58px;top:348px" width="5" height="8" viewBox="0 0 5 8"><path d="M0.5 0.5 L4.5 4.0 L0.5 7.5" fill="none" stroke="#555" stroke-width="1.2"/></svg>
<svg style="left:70px;top:344px" width="16" height="16" viewBox="0 0 16 16"><g><rect x="7" y="0" width="3.6" height="3.6" fill="#f6a82a"/><rect x="1" y="3.5" width="3.6" height="3.6" fill="#f6a82a"/><rect x="7" y="5" width="3.6" height="3.6" fill="#f0962a"/><rect x="12" y="3.5" width="3.6" height="3.6" fill="#f6a82a"/><rect x="1" y="9" width="3.6" height="3.6" fill="#f0962a"/><rect x="7" y="10.5" width="3.6" height="3.6" fill="#d8822a"/><rect x="12" y="9" width="3.6" height="3.6" fill="#d8822a"/></g></svg>
<div class="a" style="left:92px;top:343px;font-size:12px;line-height:16px;color:#1b1b1b;line-height:18px;top:343px">Materials</div>
<svg style="left:58px;top:366px" width="5" height="8" viewBox="0 0 5 8"><path d="M0.5 0.5 L4.5 4.0 L0.5 7.5" fill="none" stroke="#555" stroke-width="1.2"/></svg>
<svg style="left:70px;top:362px" width="16" height="16" viewBox="0 0 16 16"><path d="M2 0.5 L9 5 L6 6 L13 11" fill="none" stroke="#3a80c8" stroke-width="1.6"/><path d="M0.5 13 H5 M2.8 10.8 V15.2" stroke="#d81b50" stroke-width="1.1"/><path d="M10 13.5 H15" stroke="#3a80c8" stroke-width="1.1"/></svg>
<div class="a" style="left:92px;top:361px;font-size:12px;line-height:16px;color:#1b1b1b;line-height:18px;top:361px">Electric Currents</div>
<svg style="left:58px;top:384px" width="5" height="8" viewBox="0 0 5 8"><path d="M0.5 0.5 L4.5 4.0 L0.5 7.5" fill="none" stroke="#555" stroke-width="1.2"/></svg>
<svg style="left:70px;top:380px" width="16" height="16" viewBox="0 0 16 16"><path d="M1.5 2 Q0 8 1.5 15" fill="none" stroke="#f0a040" stroke-width="1"/><path d="M3.5 3 L6 1 H13 L15 3 V15 H6 L3.5 13 Z" fill="#f2a24a" stroke="#e05a2a" stroke-width="0.9"/><path d="M6 15 V3.2 H15 M3.5 3 L6 3.2" fill="none" stroke="#e05a2a" stroke-width="0.9"/></svg>
<div class="a" style="left:92px;top:379px;font-size:12px;line-height:16px;color:#1b1b1b;line-height:18px;top:379px">Heat Transfer in Solids</div>
<svg style="left:56px;top:404px" width="8" height="5" viewBox="0 0 8 5"><path d="M0.5 0.5 L4.0 4.5 L7.5 0.5" fill="none" stroke="#222" stroke-width="1.3"/></svg>
<svg style="left:70px;top:398px" width="16" height="16" viewBox="0 0 16 16"><circle cx="8" cy="4" r="3.5" fill="none" stroke="#aac" stroke-width="0.8"/><circle cx="8" cy="4" r="1" fill="#3c9"/><path d="M2 11 L7 7" stroke="#3a80c8"/><rect x="0.5" y="10" width="3" height="3" fill="#3a80c8"/><rect x="4.5" y="9" width="3" height="3.5" fill="#3aa040"/><rect x="8.5" y="9" width="3" height="3.5" fill="#e8603a"/><rect x="12.5" y="9" width="3" height="3.5" fill="#d0208a"/><path d="M5 12.5 V15 H14 V12.5 M9.5 12.5 V15" fill="none" stroke="#777" stroke-width="0.9"/></svg>
<div class="a" style="left:92px;top:397px;font-size:12px;line-height:16px;color:#1b1b1b;line-height:18px;top:397px">Multiphysics</div>
<svg style="left:90px;top:416px" width="16" height="16" viewBox="0 0 16 16"><path d="M0.5 1 L8 5 L5 6.5 L11 11" fill="none" stroke="#2e88d0" stroke-width="1.7"/><path d="M11 1 Q10 3 11 5 Q12 7 11 9 M13.5 0.5 Q12.5 3 13.5 5 Q14.5 7 13.5 9" fill="none" stroke="#f0a040" stroke-width="0.9"/><rect x="0" y="13.2" width="14" height="2.3" fill="#d81b50"/></svg>
<div class="a" style="left:112px;top:415px;font-size:12px;line-height:16px;color:#1b1b1b;line-height:18px;top:415px">Electromagnetic Heating 1</div>
<svg style="left:56px;top:440px" width="8" height="5" viewBox="0 0 8 5"><path d="M0.5 0.5 L4.0 4.5 L7.5 0.5" fill="none" stroke="#222" stroke-width="1.3"/></svg>
<svg style="left:70px;top:434px" width="16" height="16" viewBox="0 0 16 16"><path d="M8 1.5 L15.3 14.5 H0.7 Z" fill="#c8c8c8" stroke="#8a8a8a" stroke-width="1.1"/><path d="M5.5 6 H10.5 M3.3 10 H12.7 M5.5 6 L8 14.5 M10.5 6 L8 14.5 M3.3 10 L5 14.5 M12.7 10 L11 14.5" stroke="#eee" stroke-width="0.6" fill="none"/></svg>
<div class="a" style="left:92px;top:433px;font-size:12px;line-height:16px;color:#1b1b1b;line-height:18px;top:433px">Mesh 1</div>
<svg style="left:90px;top:452px" width="16" height="16" viewBox="0 0 16 16"><path d="M6.5 2.5 L12 12 H1 Z" fill="#d0d0d0" stroke="#8a8a8a" stroke-width="1"/><rect x="0" y="13.5" width="16" height="2.2" fill="#8a8a8a"/><rect x="13.5" y="0" width="2.2" height="15" fill="#8a8a8a"/><path d="M1 13.6 V15.6 M3 13.6 V15.6 M5 13.6 V15.6 M7 13.6 V15.6 M9 13.6 V15.6 M11 13.6 V15.6 M13.6 2 H15.8 M13.6 4 H15.8 M13.6 6 H15.8 M13.6 8 H15.8 M13.6 10 H15.8" stroke="#fff" stroke-width="0.5"/></svg>
<div class="a" style="left:112px;top:451px;font-size:12px;line-height:16px;color:#1b1b1b;line-height:18px;top:451px">Size</div>
<svg style="left:90px;top:470px" width="16" height="16" viewBox="0 0 16 16"><rect x="0.6" y="0.6" width="14.8" height="14.8" fill="#fff" stroke="#3ea53e" stroke-width="1.1"/><path d="M8 2.5 L13.5 13.5 H3 Q1.5 11 3 8 Z" fill="#c0c0c0" stroke="#888" stroke-width="0.8"/><path d="M6 7 L10.5 13 M10 7 L6 13" stroke="#eee" stroke-width="0.6"/></svg>
<div class="a" style="left:112px;top:469px;font-size:12px;line-height:16px;color:#1b1b1b;line-height:18px;top:469px">Free Tetrahedral 1</div>
<svg style="left:38px;top:492px" width="5" height="8" viewBox="0 0 5 8"><path d="M0.5 0.5 L4.5 4.0 L0.5 7.5" fill="none" stroke="#555" stroke-width="1.2"/></svg>
<svg style="left:50px;top:488px" width="16" height="16" viewBox="0 0 16 16"><path d="M0.5 8 Q2 4.5 4 7 Q5 8.5 6 7.5" fill="none" stroke="#1e8eb0" stroke-width="1.1"/><circle cx="8" cy="8" r="2.3" fill="none" stroke="#1e8eb0" stroke-width="1.1"/><path d="M10.3 8 H11.2" stroke="#1e8eb0"/><circle cx="13.5" cy="8" r="2.3" fill="none" stroke="#1e8eb0" stroke-width="1.1"/></svg>
<div class="a" style="left:72px;top:487px;font-size:12px;line-height:16px;color:#1b1b1b;line-height:18px;top:487px">Study 1</div>
<svg style="left:36px;top:512px" width="8" height="5" viewBox="0 0 8 5"><path d="M0.5 0.5 L4.0 4.5 L7.5 0.5" fill="none" stroke="#222" stroke-width="1.3"/></svg>
<svg style="left:50px;top:506px" width="16" height="16" viewBox="0 0 16 16"><path d="M0.5 11 L2.5 14.5 H15 V12" fill="#ccc" stroke="#888" stroke-width="0.9"/><rect x="2.5" y="0.5" width="9" height="9" fill="#fff" stroke="#888" stroke-width="0.9"/><rect x="4.5" y="2.5" width="9" height="9" fill="#fff" stroke="#888" stroke-width="0.9"/><rect x="6.5" y="4.5" width="8.5" height="8.5" fill="#fff" stroke="#888" stroke-width="0.9"/><rect x="8" y="6" width="5.5" height="5.5" fill="#c0579f"/></svg>
<div class="a" style="left:72px;top:505px;font-size:12px;line-height:16px;color:#1b1b1b;line-height:18px;top:505px">Results</div>
<svg style="left:58px;top:528px" width="5" height="8" viewBox="0 0 5 8"><path d="M0.5 0.5 L4.5 4.0 L0.5 7.5" fill="none" stroke="#555" stroke-width="1.2"/></svg>
<svg style="left:70px;top:524px" width="16" height="16" viewBox="0 0 16 16"><rect x="2.0" y="1.0" width="1.3" height="1.2" fill="#b0489a"/><rect x="4.3" y="1.0" width="1.3" height="1.2" fill="#b0489a"/><rect x="6.6" y="1.0" width="1.3" height="1.2" fill="#b0489a"/><rect x="8.899999999999999" y="1.0" width="1.3" height="1.2" fill="#b0489a"/><rect x="11.2" y="1.0" width="1.3" height="1.2" fill="#b0489a"/><rect x="2.0" y="3.2" width="1.3" height="1.2" fill="#999"/><rect x="4.3" y="3.2" width="1.3" height="1.2" fill="#999"/><rect x="6.6" y="3.2" width="1.3" height="1.2" fill="#999"/><rect x="8.899999999999999" y="3.2" width="1.3" height="1.2" fill="#999"/><rect x="11.2" y="3.2" width="1.3" height="1.2" fill="#999"/><rect x="2.0" y="5.4" width="1.3" height="1.2" fill="#b0489a"/><rect x="4.3" y="5.4" width="1.3" height="1.2" fill="#b0489a"/><rect x="6.6" y="5.4" width="1.3" height="1.2" fill="#b0489a"/><rect x="8.899999999999999" y="5.4" width="1.3" height="1.2" fill="#b0489a"/><rect x="11.2" y="5.4" width="1.3" height="1.2" fill="#b0489a"/><rect x="2.0" y="7.6000000000000005" width="1.3" height="1.2" fill="#999"/><rect x="4.3" y="7.6000000000000005" width="1.3" height="1.2" fill="#999"/><rect x="6.6" y="7.6000000000000005" width="1.3" height="1.2" fill="#999"/><rect x="8.899999999999999" y="7.6000000000000005" width="1.3" height="1.2" fill="#999"/><rect x="11.2" y="7.6000000000000005" width="1.3" height="1.2" fill="#999"/><rect x="2.0" y="9.8" width="1.3" height="1.2" fill="#b0489a"/><rect x="4.3" y="9.8" width="1.3" height="1.2" fill="#b0489a"/><rect x="6.6" y="9.8" width="1.3" height="1.2" fill="#b0489a"/><rect x="8.899999999999999" y="9.8" width="1.3" height="1.2" fill="#b0489a"/><rect x="11.2" y="9.8" width="1.3" height="1.2" fill="#b0489a"/><rect x="2.0" y="12.0" width="1.3" height="1.2" fill="#999"/><rect x="4.3" y="12.0" width="1.3" height="1.2" fill="#999"/><rect x="6.6" y="12.0" width="1.3" height="1.2" fill="#999"/><rect x="8.899999999999999" y="12.0" width="1.3" height="1.2" fill="#999"/><rect x="11.2" y="12.0" width="1.3" height="1.2" fill="#999"/><rect x="2.0" y="14.200000000000001" width="1.3" height="1.2" fill="#b0489a"/><rect x="4.3" y="14.200000000000001" width="1.3" height="1.2" fill="#b0489a"/><rect x="6.6" y="14.200000000000001" width="1.3" height="1.2" fill="#b0489a"/><rect x="8.899999999999999" y="14.200000000000001" width="1.3" height="1.2" fill="#b0489a"/><rect x="11.2" y="14.200000000000001" width="1.3" height="1.2" fill="#b0489a"/></svg>
<div class="a" style="left:92px;top:523px;font-size:12px;line-height:16px;color:#1b1b1b;line-height:18px;top:523px">Datasets</div>
<svg style="left:58px;top:546px" width="5" height="8" viewBox="0 0 5 8"><path d="M0.5 0.5 L4.5 4.0 L0.5 7.5" fill="none" stroke="#555" stroke-width="1.2"/></svg>
<svg style="left:70px;top:542px" width="16" height="16" viewBox="0 0 16 16"><path d="M8 14 V1.5" stroke="#2e88d0" stroke-width="1.1"/><path d="M6 3.5 L8 0.5 L10 3.5 Z" fill="#2e88d0"/><path d="M8 14 L1 10" stroke="#3aa040" stroke-width="1.1"/><path d="M1 12.5 V8.5 L3 10" fill="#3aa040" stroke="#3aa040" stroke-width="0.8"/><path d="M8 14 L15 10" stroke="#d81b50" stroke-width="1.1"/><path d="M12 9.5 L15.5 9.5 L14 12" fill="#d81b50"/></svg>
<div class="a" style="left:92px;top:541px;font-size:12px;line-height:16px;color:#1b1b1b;line-height:18px;top:541px">Views</div>
<svg style="left:58px;top:564px" width="5" height="8" viewBox="0 0 5 8"><path d="M0.5 0.5 L4.5 4.0 L0.5 7.5" fill="none" stroke="#555" stroke-width="1.2"/></svg>
<svg style="left:70px;top:560px" width="16" height="16" viewBox="0 0 16 16"><text x="-0.5" y="7.2" font-size="9" letter-spacing="-0.6" fill="#b3519d" font-family="Liberation Sans">8.85</text><text x="-0.5" y="15.5" font-size="9" letter-spacing="-0.6" fill="#b3519d" font-family="Liberation Sans">e-12</text></svg>
<div class="a" style="left:92px;top:559px;font-size:12px;line-height:16px;color:#1b1b1b;line-height:18px;top:559px">Derived Values</div>
<svg style="left:58px;top:582px" width="5" height="8" viewBox="0 0 5 8"><path d="M0.5 0.5 L4.5 4.0 L0.5 7.5" fill="none" stroke="#555" stroke-width="1.2"/></svg>
<svg style="left:70px;top:578px" width="16" height="16" viewBox="0 0 16 16"><rect x="1.6" y="0.6" width="13" height="14" fill="#fff" stroke="#b3519d" stroke-width="1.2"/><path d="M1.6 4 H14.6 M1.6 7.5 H14.6 M1.6 11 H14.6 M6 0.6 V14.6 M10.3 0.6 V14.6" stroke="#b3519d" stroke-width="1"/></svg>
<div class="a" style="left:92px;top:577px;font-size:12px;line-height:16px;color:#1b1b1b;line-height:18px;top:577px">Tables</div>
<svg style="left:70px;top:596px" width="16" height="16" viewBox="0 0 16 16"><rect x="0.5" y="0" width="3" height="3" fill="#c8103a"/><rect x="0.5" y="3" width="3" height="3" fill="#f0a040"/><rect x="0.5" y="6" width="3" height="3" fill="#3aa040"/><rect x="0.5" y="9" width="3" height="3" fill="#2e88d0"/><rect x="0.5" y="12" width="3" height="4" fill="#1a3a9a"/><rect x="6.5" y="0" width="3" height="6" fill="#f0a040"/><rect x="6.5" y="6" width="3" height="4" fill="#e8603a"/><rect x="6.5" y="10" width="3" height="6" fill="#d81b50"/><rect x="12.5" y="0" width="3" height="6" fill="#aaa"/><rect x="12.5" y="6" width="3" height="5" fill="#999"/><rect x="12.5" y="11" width="3" height="5" fill="#888"/></svg>
<div class="a" style="left:92px;top:595px;font-size:12px;line-height:16px;color:#1b1b1b;line-height:18px;top:595px">Color Tables</div>
<svg style="left:58px;top:618px" width="5" height="8" viewBox="0 0 5 8"><path d="M0.5 0.5 L4.5 4.0 L0.5 7.5" fill="none" stroke="#555" stroke-width="1.2"/></svg>
<svg style="left:70px;top:614px" width="16" height="16" viewBox="0 0 16 16"><path d="M1 1.5 L3 0.3 H13 L15.5 2.3 V15 H4 L1 13 Z" fill="#b3519d"/><path d="M4 15 V2.6 H15.5 M1 1 L4 2.6" fill="none" stroke="#f5d5ea" stroke-width="0.8"/></svg>
<div class="a" style="left:92px;top:613px;font-size:12px;line-height:16px;color:#1b1b1b;line-height:18px;top:613px">Electric Potential (ec)</div>
<svg style="left:58px;top:636px" width="5" height="8" viewBox="0 0 5 8"><path d="M0.5 0.5 L4.5 4.0 L0.5 7.5" fill="none" stroke="#555" stroke-width="1.2"/></svg>
<svg style="left:70px;top:632px" width="16" height="16" viewBox="0 0 16 16"><path d="M1 1.5 L3 0.3 H13 L15.5 2.3 V15 H4 L1 13 Z" fill="#b3519d"/><path d="M4 15 V2.6 H15.5 M1 1 L4 2.6" fill="none" stroke="#f5d5ea" stroke-width="0.8"/></svg>
<div class="a" style="left:92px;top:631px;font-size:12px;line-height:16px;color:#1b1b1b;line-height:18px;top:631px">Temperature (ht)</div>
<svg style="left:58px;top:654px" width="5" height="8" viewBox="0 0 5 8"><path d="M0.5 0.5 L4.5 4.0 L0.5 7.5" fill="none" stroke="#555" stroke-width="1.2"/></svg>
<svg style="left:70px;top:650px" width="16" height="16" viewBox="0 0 16 16"><path d="M1 1.5 L3 0.3 H13 L15.5 2.3 V15 H4 L1 13 Z" fill="#b3519d"/><path d="M4 15 V2.6 H15.5 M1 1 L4 2.6" fill="none" stroke="#f5d5ea" stroke-width="0.8"/></svg>
<div class="a" style="left:92px;top:649px;font-size:12px;line-height:16px;color:#1b1b1b;line-height:18px;top:649px">Isothermal Contours (ht)</div>
<svg style="left:58px;top:672px" width="5" height="8" viewBox="0 0 5 8"><path d="M0.5 0.5 L4.5 4.0 L0.5 7.5" fill="none" stroke="#555" stroke-width="1.2"/></svg>
<svg style="left:70px;top:668px" width="16" height="16" viewBox="0 0 16 16"><path d="M0.5 9 Q4 2 8 8 Q12 14 15.5 8" fill="none" stroke="#b3519d" stroke-width="1.2"/></svg>
<div class="a" style="left:92px;top:667px;font-size:12px;line-height:16px;color:#1b1b1b;line-height:18px;top:667px">Probe Plot Group 4</div>
<svg style="left:58px;top:690px" width="5" height="8" viewBox="0 0 5 8"><path d="M0.5 0.5 L4.5 4.0 L0.5 7.5" fill="none" stroke="#555" stroke-width="1.2"/></svg>
<svg style="left:70px;top:686px" width="16" height="16" viewBox="0 0 16 16"><rect x="1" y="1" width="14" height="14" fill="#b3519d"/></svg>
<div class="a" style="left:92px;top:685px;font-size:12px;line-height:16px;color:#1b1b1b;line-height:18px;top:685px">2D Plot Group 5</div>
<svg style="left:70px;top:704px" width="16" height="16" viewBox="0 0 16 16"><path d="M0 4 L3 1 H13 L16 4 V13 H3 L0 11 Z" fill="#b3519d"/><path d="M3 13 V4 H16 M5 6 H14 V12 H5 Z M7 8 H12 V10 H7 Z" fill="none" stroke="#fff" stroke-width="0.8"/></svg>
<div class="a" style="left:92px;top:703px;font-size:12px;line-height:16px;color:#1b1b1b;line-height:18px;top:703px">Export</div>
<svg style="left:70px;top:722px" width="16" height="16" viewBox="0 0 16 16"><rect x="2.5" y="2.5" width="10.5" height="13" fill="#fff" stroke="#b3519d" stroke-width="1.2"/><path d="M4.5 5.5 H8 M4.5 8 H7.5 M4.5 10.5 H6" stroke="#b3519d" stroke-width="1"/><path d="M6.5 13 L14.5 3.5 L16 5 L8 14.5 L6 15 Z" fill="#b3519d"/></svg>
<div class="a" style="left:92px;top:721px;font-size:12px;line-height:16px;color:#1b1b1b;line-height:18px;top:721px">Reports</div>
<div class="a" style="left:326px;top:177px;font-size:20px;line-height:16px;color:#2f5fa8;line-height:24px">Settings</div>
<svg style="left:621px;top:185px" width="8" height="4" viewBox="0 0 8 4"><path d="M0 0 L8 0 L4.0 4 Z" fill="#a8a8ae"/></svg>
<div class="a" style="left:635px;top:183px;width:9px;height:8px;border:1.3px solid #a8a8ae;border-top-width:2px"></div>
<svg style="left:651px;top:182.5px" width="8" height="10" viewBox="0 0 8 10"><rect x="1.5" y="0" width="5" height="6" fill="#a8a8ae"/><rect x="0" y="6" width="8" height="1.2" fill="#a8a8ae"/><rect x="3.4" y="6" width="1.2" height="4" fill="#a8a8ae"/></svg>
<div class="a" style="left:325px;top:204px;font-size:13px;line-height:16px;color:#4470be;">Mesh</div>
<svg style="left:328px;top:226px" width="12" height="12" viewBox="0 0 12 12"><path d="M0 1 L1 0 H11 L12 1 V12 H1 L0 11 Z" fill="#7c7c7c"/><path d="M1.2 12 V1.2 H12 M6.5 1.2 V12 M1.2 6.5 H12" fill="none" stroke="#f9fafe" stroke-width="0.8"/></svg>
<div class="a" style="left:346px;top:224px;font-size:12px;line-height:16px;">Build All</div>
<div class="a" style="left:324px;top:257px;font-size:12px;line-height:16px;">Label:</div>
<div class="a" style="left:365px;top:256px;width:264px;height:18px;background:#fff;border:1px solid #cfcfcf"></div>
<div class="a" style="left:368px;top:257px;font-size:12px;line-height:16px;">Mesh 1</div>
<div class="a" style="left:637px;top:254px;width:20px;height:22px;background:#ececec;border:1px solid #d8d8d8;border-radius:3px"></div>
<svg style="left:639px;top:257px" width="16" height="15" viewBox="0 0 16 15"><rect x="1.5" y="0.7" width="13" height="13" fill="#fff" stroke="#666" stroke-width="1.1"/><rect x="2" y="1.2" width="12" height="2.3" fill="#999"/><path d="M5.5 6.5 H12.5 M5.5 9 H12.5" stroke="#1fa585" stroke-width="1.1"/><path d="M1 14 L4.5 10.5" stroke="#1fa585" stroke-width="1.4"/><path d="M2 10 H5 V13 Z" fill="#1fa585"/></svg>
<div class="a" style="left:319px;top:285px;width:343px;height:1px;background:#dcdcdc;"></div>
<svg style="left:326px;top:298px" width="7" height="4" viewBox="0 0 7 4"><path d="M0.5 0.5 L3.5 3.5 L6.5 0.5" fill="none" stroke="#3a68b0" stroke-width="1.3"/></svg>
<div class="a" style="left:345px;top:292px;font-size:13px;line-height:16px;color:#3465b0;">Sequence Type</div>
<div class="a" style="left:324px;top:321px;width:333px;height:21px;background:#eeeeef;border:1px solid #d6d6d6;border-radius:3px"></div>
<div class="a" style="left:337px;top:324px;font-size:12px;line-height:16px;">User-controlled mesh</div>
<svg style="left:643px;top:330px" width="7" height="4" viewBox="0 0 7 4"><path d="M0 0 L7 0 L3.5 4 Z" fill="#111"/></svg>
<div class="a" style="left:319px;top:353px;width:343px;height:1px;background:#dcdcdc;"></div>
<svg style="left:326px;top:366px" width="7" height="4" viewBox="0 0 7 4"><path d="M0.5 0.5 L3.5 3.5 L6.5 0.5" fill="none" stroke="#3a68b0" stroke-width="1.3"/></svg>
<div class="a" style="left:345px;top:360px;font-size:13px;line-height:16px;color:#3465b0;">Build Settings</div>
<div class="a" style="left:325px;top:390px;width:14px;height:13px;background:#f0f0f0;border:1px solid #6f6f6f"></div>
<div class="a" style="left:344px;top:388px;font-size:12px;line-height:16px;">Build new operations automatically</div>
<div class="a" style="left:676px;top:177px;font-size:20px;line-height:16px;color:#2f5fa8;line-height:24px">Graphics</div>
<svg style="left:1551px;top:185px" width="8" height="4" viewBox="0 0 8 4"><path d="M0 0 L8 0 L4.0 4 Z" fill="#a8a8ae"/></svg>
<div class="a" style="left:1565px;top:183px;width:9px;height:8px;border:1.3px solid #a8a8ae;border-top-width:2px"></div>
<svg style="left:1581px;top:182.5px" width="8" height="10" viewBox="0 0 8 10"><rect x="1.5" y="0" width="5" height="6" fill="#a8a8ae"/><rect x="0" y="6" width="8" height="1.2" fill="#a8a8ae"/><rect x="3.4" y="6" width="1.2" height="4" fill="#a8a8ae"/></svg>
<div class="a" style="left:681px;top:783px;font-size:13px;line-height:16px;color:#3d5da8;">Messages</div>
<svg style="left:748px;top:787px" width="9" height="8" viewBox="0 0 9 8"><path d="M0.5 0.5 L8.5 7.5 M8.5 0.5 L0.5 7.5" stroke="#a0a0a0" stroke-width="1.1"/></svg>
<div class="a" style="left:787px;top:783px;font-size:13px;line-height:16px;color:#333;">Progress</div>
<div class="a" style="left:866px;top:783px;font-size:13px;line-height:16px;color:#333;">Log</div>
<div class="a" style="left:669px;top:806px;width:923px;height:1px;background:#d8d8d8;"></div>
<div class="a" style="left:677px;top:804px;width:87px;height:2px;background:#2d7ecd;"></div>
<svg style="left:1551px;top:788px" width="8" height="4" viewBox="0 0 8 4"><path d="M0 0 L8 0 L4.0 4 Z" fill="#a8a8ae"/></svg>
<div class="a" style="left:1565px;top:786px;width:9px;height:8px;border:1.3px solid #a8a8ae;border-top-width:2px"></div>
<svg style="left:1581px;top:785.5px" width="8" height="10" viewBox="0 0 8 10"><rect x="1.5" y="0" width="5" height="6" fill="#a8a8ae"/><rect x="0" y="6" width="8" height="1.2" fill="#a8a8ae"/><rect x="3.4" y="6" width="1.2" height="4" fill="#a8a8ae"/></svg>
<svg style="left:679px;top:810px" width="11" height="16" viewBox="0 0 11 16"><path d="M1 0.5 L5 9" stroke="#666" stroke-width="1.2"/><path d="M3 8 L6.5 7 L10.5 15 Q7 16 4 14 Z" fill="#f0a850"/></svg>
<svg style="left:699px;top:811px" width="17" height="13" viewBox="0 0 17 13"><rect x="0.6" y="0.6" width="12" height="9" fill="#fff" stroke="#2e84cc" stroke-width="1.1"/><rect x="4.6" y="4.6" width="11.5" height="8" fill="#fff" stroke="#2e84cc" stroke-width="1.1"/><path d="M4.6 4.6 L10.3 9 L16 4.6" fill="none" stroke="#2e84cc" stroke-width="0.9"/></svg>
<div class="a" style="left:673px;top:831px;width:915px;height:28px;background:#f9fafe;border:1px solid #d0d0d0"></div>
<div class="a" style="left:918px;top:872px;font-size:12px;line-height:16px;color:#1b1b1b;letter-spacing:-0.65px">1.94 GB | 2.24 GB</div>
<div class="a" style="left:669px;top:225px;width:923px;height:543px;background:linear-gradient(#f8fafe 0%,#f0f5fd 45%,#e2eefc 100%)"></div>
<svg style="left:677px;top:205px" width="14" height="14" viewBox="0 0 14 14"><circle cx="6" cy="6" r="4.8" fill="none" stroke="#2e84cc" stroke-width="1.6"/><path d="M3.5 6 H8.5 M6 3.5 V8.5" stroke="#2e84cc" stroke-width="1.3"/><path d="M9.5 9.5 L13.5 13.5" stroke="#2e84cc" stroke-width="2.2"/></svg>
<svg style="left:697px;top:210px" width="7" height="4" viewBox="0 0 7 4"><path d="M0 0 L7 0 L3.5 4 Z" fill="#111"/></svg>
<div class="a" style="left:716px;top:204px;width:1px;height:16px;background:#d0d0d4;"></div>
<svg style="left:724px;top:206px" width="17" height="12" viewBox="0 0 17 12"><path d="M8 10 V1" stroke="#2e88d0" stroke-width="1.2"/><path d="M6 3 L8 0 L10 3Z" fill="#2e88d0"/><path d="M8 10 L1 7" stroke="#3aa040" stroke-width="1.2"/><path d="M8 10 L16 6" stroke="#d81b50" stroke-width="1.2"/><path d="M13 5 L16.5 5.5 L15 8.5Z" fill="#d81b50"/></svg>
<svg style="left:746px;top:210px" width="7" height="4" viewBox="0 0 7 4"><path d="M0 0 L7 0 L3.5 4 Z" fill="#111"/></svg>
<div class="a" style="left:765px;top:204px;width:1px;height:16px;background:#d0d0d4;"></div>
<svg style="left:775px;top:206px" width="14" height="14" viewBox="0 0 14 14"><path d="M11.5 4.5 A5.3 5.3 0 1 0 12.3 8" fill="none" stroke="#2e84cc" stroke-width="1.6"/><path d="M8.5 1 L13 1.5 L12 6Z" fill="#2e84cc"/></svg>
<svg style="left:795px;top:210px" width="7" height="4" viewBox="0 0 7 4"><path d="M0 0 L7 0 L3.5 4 Z" fill="#111"/></svg>
<div class="a" style="left:813px;top:204px;width:1px;height:16px;background:#d0d0d4;"></div>
<svg style="left:821px;top:207px" width="17" height="11" viewBox="0 0 17 11"><path d="M2.5 1 H14 Q16.5 1 16.5 5.5 Q16.5 10 14 10 H2.5 Q0 10 0 5.5 Q0 1 2.5 1Z" fill="#2e84cc"/><path d="M4 1.2 V9.8" stroke="#fff" stroke-width="0.7"/></svg>
<svg style="left:844px;top:210px" width="7" height="4" viewBox="0 0 7 4"><path d="M0 0 L7 0 L3.5 4 Z" fill="#111"/></svg>
<div class="a" style="left:862px;top:204px;width:1px;height:16px;background:#d0d0d4;"></div>
<svg style="left:870px;top:205px" width="16" height="14" viewBox="0 0 16 14"><path d="M1 6 Q0 6 0 8 V11 Q0 13 2 13 H14 Q16 13 16 11 V8 Q16 6 15 6Z" fill="#a9a9a9"/><rect x="3.5" y="1" width="9" height="7" fill="none" stroke="#8a8a8a" stroke-dasharray="1.5 1"/><rect x="5" y="3" width="6" height="3" fill="#8a8a8a"/></svg>
<svg style="left:892px;top:210px" width="7" height="4" viewBox="0 0 7 4"><path d="M0 0 L7 0 L3.5 4 Z" fill="#111"/></svg>
<svg style="left:911px;top:205px" width="16" height="14" viewBox="0 0 16 14"><path d="M1 6 Q0 6 0 8 V11 Q0 13 2 13 H14 Q16 13 16 11 V8 Q16 6 15 6Z" fill="#2e84cc"/><rect x="3.5" y="1" width="9" height="7" fill="none" stroke="#2e84cc" stroke-dasharray="1.5 1"/><rect x="5" y="3" width="6" height="3" fill="#2e84cc"/></svg>
<svg style="left:933px;top:210px" width="7" height="4" viewBox="0 0 7 4"><path d="M0 0 L7 0 L3.5 4 Z" fill="#111"/></svg>
<svg style="left:952px;top:205px" width="15" height="15" viewBox="0 0 15 15"><rect x="0.7" y="0.7" width="12" height="12" fill="none" stroke="#2e84cc" stroke-width="1.2" stroke-dasharray="2 1.3"/><rect x="3" y="3" width="6" height="6" fill="#2e84cc"/><path d="M8 8 L14.5 14.5" stroke="#2e84cc" stroke-width="1.2"/><path d="M7.5 7.5 L12 8.5 L8.5 12Z" fill="#2e84cc"/></svg>
<svg style="left:973px;top:210px" width="7" height="4" viewBox="0 0 7 4"><path d="M0 0 L7 0 L3.5 4 Z" fill="#111"/></svg>
<div class="a" style="left:992px;top:204px;width:1px;height:16px;background:#d0d0d4;"></div>
<svg style="left:1000px;top:206px" width="15" height="12" viewBox="0 0 15 12"><path d="M1 6 Q7.5 0 14 6 Q7.5 12 1 6Z" fill="none" stroke="#2e84cc" stroke-width="1.4"/><circle cx="7.5" cy="6" r="2" fill="#2e84cc"/><path d="M2 1 L13 11" stroke="#2e84cc" stroke-width="1.4"/></svg>
<svg style="left:1021px;top:210px" width="7" height="4" viewBox="0 0 7 4"><path d="M0 0 L7 0 L3.5 4 Z" fill="#111"/></svg>
<div class="a" style="left:1040px;top:204px;width:1px;height:16px;background:#d0d0d4;"></div>
<svg style="left:1047px;top:204px" width="16" height="16" viewBox="0 0 16 16"><g fill="none" stroke="#777" stroke-width="1"><path d="M0.5 4 L4 0.5 H15.5 V12 L12 15.5 H0.5Z M0.5 4 H12 V15.5 M12 4 L15.5 0.5"/><path d="M4 0.5 V12 H15.5 M4 12 L0.5 15.5" stroke="#2e84cc"/></g></svg>
<svg style="left:1069px;top:210px" width="7" height="4" viewBox="0 0 7 4"><path d="M0 0 L7 0 L3.5 4 Z" fill="#111"/></svg>
<svg style="left:1088px;top:205px" width="16" height="15" viewBox="0 0 16 15"><rect x="0.6" y="0.6" width="15" height="14" fill="#fff" stroke="#777" stroke-width="1.1"/><g stroke="#2e84cc" stroke-width="1"><path d="M4 3 V12.5 M7.5 3 V12.5 M11 3 V12.5 M2.5 4.5 H13.5 M2.5 8 H13.5 M2.5 11 H13.5"/></g></svg>
<svg style="left:1109px;top:210px" width="7" height="4" viewBox="0 0 7 4"><path d="M0 0 L7 0 L3.5 4 Z" fill="#111"/></svg>
<div class="a" style="left:1128px;top:204px;width:1px;height:16px;background:#d0d0d4;"></div>
<svg style="left:1137px;top:205px" width="15" height="15" viewBox="0 0 15 15"><path d="M7 0.5 Q14 0.5 14 7 Q14 10 11 10 Q9 10 9.5 12 Q10 14.5 7 14.5 Q0.5 14.5 0.5 7.5 Q0.5 0.5 7 0.5Z" fill="#eee" stroke="#888" stroke-width="1"/><circle cx="4" cy="5" r="1.4" fill="#d81b50"/><circle cx="7.5" cy="3.5" r="1.4" fill="#3aa040"/><circle cx="10.5" cy="5.5" r="1.4" fill="#2e88d0"/><circle cx="4" cy="9.5" r="1.4" fill="#f0a040"/></svg>
<svg style="left:1157px;top:210px" width="7" height="4" viewBox="0 0 7 4"><path d="M0 0 L7 0 L3.5 4 Z" fill="#111"/></svg>
<div class="a" style="left:1176px;top:204px;width:1px;height:16px;background:#d0d0d4;"></div>
<svg style="left:1184px;top:205px" width="15" height="15" viewBox="0 0 15 15"><circle cx="7.5" cy="7.5" r="6.8" fill="#2e84cc"/><g stroke="#f9fafe" stroke-width="1.1"><path d="M7.5 0.7 L10 6 M14.3 7.5 L8.5 9.5 M10.5 13.5 L6 9 M2 11 L5 6 M2.5 3 L8 4.5"/></g><circle cx="7.5" cy="7.5" r="2.3" fill="#f9fafe"/></svg>
<svg style="left:1206px;top:210px" width="7" height="4" viewBox="0 0 7 4"><path d="M0 0 L7 0 L3.5 4 Z" fill="#111"/></svg>
<svg style="left:1565px;top:229px" width="24" height="21" viewBox="0 0 24 21"><defs><linearGradient id="lg2" x1="0" y1="0" x2="1" y2="0"><stop offset="0" stop-color="#1a2f9a"/><stop offset="0.2" stop-color="#2a6ad0"/><stop offset="0.7" stop-color="#3a8ae0"/><stop offset="1" stop-color="#0e1f80"/></linearGradient></defs><path d="M1 6 L17 1 L22 14 L6 20Z" fill="#ececee" stroke="#dcdcdc" stroke-width="0.6"/><rect x="4.5" y="5" width="15" height="10.5" rx="3" fill="url(#lg2)" stroke="#0e1f80" stroke-width="1"/><path d="M7.5 7 L16 10.5 L7.5 14 Z" fill="#f4e040"/><path d="M7.5 7 L16 10.5 L10 9 Z" fill="#fff8a0"/></svg>
<svg style="left:0;top:0" width="1596" height="894" viewBox="0 0 1596 894"><defs><pattern id="pWall" width="10" height="17.0" patternUnits="userSpaceOnUse" patternTransform="rotate(13.5) skewX(-6)"><rect width="10" height="17.0" fill="#a8552e"/><path d="M0 0 H10 M0 8.5 H10 M0 17.0 H10 M0 0 L5.0 8.5 L10 17.0 M10 0 L5.0 8.5 L0 17.0" stroke="#0a0401" stroke-width="0.95" fill="none"/></pattern><pattern id="pBar" width="4.4" height="6.6" patternUnits="userSpaceOnUse" patternTransform="rotate(-14)"><rect width="4.4" height="6.6" fill="#d07440"/><path d="M0 0 H4.4 M0 3.3 H4.4 M0 6.6 H4.4 M0 0 L2.2 3.3 L4.4 6.6 M4.4 0 L2.2 3.3 L0 6.6" stroke="#080301" stroke-width="0.8" fill="none"/></pattern><pattern id="pBarL" width="4.2" height="6.4" patternUnits="userSpaceOnUse" patternTransform="rotate(-14)"><rect width="4.2" height="6.4" fill="#e8b870"/><path d="M0 0 H4.2 M0 3.2 H4.2 M0 6.4 H4.2 M0 0 L2.1 3.2 L4.2 6.4 M4.2 0 L2.1 3.2 L0 6.4" stroke="#0a0502" stroke-width="0.95" fill="none"/></pattern><pattern id="pBarF" width="4.0" height="5.2" patternUnits="userSpaceOnUse" patternTransform="rotate(-12)"><rect width="4.0" height="5.2" fill="#cc6a32"/><path d="M0 0 H4.0 M0 2.6 H4.0 M0 5.2 H4.0 M0 0 L2.0 2.6 L4.0 5.2 M4.0 0 L2.0 2.6 L0 5.2" stroke="#080301" stroke-width="0.75" fill="none"/></pattern><pattern id="pBarO" width="4.2" height="6.4" patternUnits="userSpaceOnUse" patternTransform="rotate(-16)"><rect width="4.2" height="6.4" fill="#e88048"/><path d="M0 0 H4.2 M0 3.2 H4.2 M0 6.4 H4.2 M0 0 L2.1 3.2 L4.2 6.4 M4.2 0 L2.1 3.2 L0 6.4" stroke="#080301" stroke-width="0.8" fill="none"/></pattern><pattern id="pBrk" width="2.8" height="4.8" patternUnits="userSpaceOnUse" patternTransform="rotate(10)"><rect width="2.8" height="4.8" fill="#b05a30"/><path d="M0 0 H2.8 M0 2.4 H2.8 M0 4.8 H2.8 M0 0 L1.4 2.4 L2.8 4.8 M2.8 0 L1.4 2.4 L0 4.8" stroke="#0c0402" stroke-width="0.7" fill="none"/></pattern><pattern id="pPost" width="4.4" height="6.4" patternUnits="userSpaceOnUse" patternTransform="rotate(90)"><rect width="4.4" height="6.4" fill="#f07c3a"/><path d="M0 0 H4.4 M0 3.2 H4.4 M0 6.4 H4.4 M0 0 L2.2 3.2 L4.4 6.4 M4.4 0 L2.2 3.2 L0 6.4" stroke="#080301" stroke-width="0.8" fill="none"/></pattern><pattern id="pPlate" width="3.4" height="5.2" patternUnits="userSpaceOnUse" patternTransform="rotate(-17)"><rect width="3.4" height="5.2" fill="#c4c4c4"/><path d="M0 0 H3.4 M0 2.6 H3.4 M0 5.2 H3.4 M0 0 L1.7 2.6 L3.4 5.2 M3.4 0 L1.7 2.6 L0 5.2" stroke="#050505" stroke-width="0.8" fill="none"/></pattern><pattern id="pCyl" width="9" height="15.0" patternUnits="userSpaceOnUse" patternTransform="rotate(4)"><rect width="9" height="15.0" fill="#c0c0c0"/><path d="M0 0 H9 M0 7.5 H9 M0 15.0 H9 M0 0 L4.5 7.5 L9 15.0 M9 0 L4.5 7.5 L0 15.0" stroke="#0a0a0a" stroke-width="1.05" fill="none"/></pattern><pattern id="pWash" width="2.6" height="4.0" patternUnits="userSpaceOnUse" patternTransform="rotate(-10)"><rect width="2.6" height="4.0" fill="#5a5a5a"/><path d="M0 0 H2.6 M0 2.0 H2.6 M0 4.0 H2.6 M0 0 L1.3 2.0 L2.6 4.0 M2.6 0 L1.3 2.0 L0 4.0" stroke="#030303" stroke-width="0.7" fill="none"/></pattern><pattern id="pCol" width="2.8" height="4.4" patternUnits="userSpaceOnUse"><rect width="2.8" height="4.4" fill="#bbbbbb"/><path d="M0 0 H2.8 M0 2.2 H2.8 M0 4.4 H2.8 M0 0 L1.4 2.2 L2.8 4.4 M2.8 0 L1.4 2.2 L0 4.4" stroke="#080808" stroke-width="0.6" fill="none"/></pattern><linearGradient id="gWallShade" x1="0" y1="0" x2="1" y2="0">
<stop offset="0" stop-color="#fff" stop-opacity="0.06"/><stop offset="0.4" stop-color="#000" stop-opacity="0.14"/><stop offset="0.65" stop-color="#000" stop-opacity="0.08"/><stop offset="1" stop-color="#fff" stop-opacity="0.04"/></linearGradient>
<linearGradient id="gCyl" x1="0" y1="0" x2="1" y2="0">
<stop offset="0" stop-color="#000" stop-opacity="0.5"/><stop offset="0.12" stop-color="#000" stop-opacity="0.15"/><stop offset="0.35" stop-color="#fff" stop-opacity="0.12"/><stop offset="0.75" stop-color="#000" stop-opacity="0.18"/><stop offset="1" stop-color="#000" stop-opacity="0.55"/></linearGradient>
<linearGradient id="gCylV" x1="0" y1="0" x2="0" y2="1"><stop offset="0" stop-color="#000" stop-opacity="0.45"/><stop offset="0.3" stop-color="#000" stop-opacity="0"/><stop offset="1" stop-color="#000" stop-opacity="0"/></linearGradient>
<linearGradient id="gPost" x1="0" y1="0" x2="1" y2="0">
<stop offset="0" stop-color="#000" stop-opacity="0.55"/><stop offset="0.2" stop-color="#000" stop-opacity="0.1"/><stop offset="0.5" stop-color="#fff" stop-opacity="0.05"/><stop offset="0.8" stop-color="#000" stop-opacity="0.1"/><stop offset="1" stop-color="#000" stop-opacity="0.55"/></linearGradient>
<radialGradient id="gPlateHi" cx="0.5" cy="0.5" r="0.5"><stop offset="0" stop-color="#fff" stop-opacity="0.2"/><stop offset="1" stop-color="#fff" stop-opacity="0"/></radialGradient>
<filter id="fb" x="-50%" y="-50%" width="200%" height="200%"><feGaussianBlur stdDeviation="1.6"/></filter>
<filter id="fb2" x="-50%" y="-50%" width="200%" height="200%"><feGaussianBlur stdDeviation="8"/></filter>
</defs><polygon points="744.5,561 1178,760 1431,658 1431,662 1178,764 744.5,565" fill="#333" stroke="#000" stroke-width="0.8"/><polyline points="744.5,563 1178,762 1431,660" fill="none" stroke="#8a8a8a" stroke-width="0.7"/><polygon points="744.5,561 984,493 991,492 999,498 1431,658 1178,760" fill="url(#pPlate)" stroke="#000" stroke-width="1.2"/><ellipse cx="1000" cy="600" rx="110" ry="40" fill="url(#gPlateHi)" transform="rotate(22 1000 600)"/><ellipse cx="1190" cy="690" rx="120" ry="38" fill="url(#gPlateHi)" transform="rotate(22 1190 690)"/><ellipse cx="870" cy="590" rx="70" ry="25" fill="url(#gPlateHi)" transform="rotate(22 870 590)"/><ellipse cx="1300" cy="640" rx="80" ry="25" fill="url(#gPlateHi)" transform="rotate(22 1300 640)"/><polyline points="771.5,569 819.5,560 943.5,614 912.5,628 786.5,574" fill="none" stroke="#bbb" stroke-width="1" opacity="0.5"/><polyline points="771,567 819,558 943,612 912,626 786,572" fill="none" stroke="#000" stroke-width="2.2" opacity="0.6"/><polyline points="946.5,526 1069.5,576 1040.5,588" fill="none" stroke="#bbb" stroke-width="1" opacity="0.5"/><polyline points="946,524 1069,574 1040,586" fill="none" stroke="#000" stroke-width="2.2" opacity="0.6"/><polyline points="948.5,646 1172.5,572" fill="none" stroke="#bbb" stroke-width="1" opacity="0.5"/><polyline points="948,644 1172,570" fill="none" stroke="#000" stroke-width="2.2" opacity="0.6"/><polyline points="1143.5,602 1299.5,667 1239.5,693" fill="none" stroke="#bbb" stroke-width="1" opacity="0.5"/><polyline points="1143,600 1299,665 1239,691" fill="none" stroke="#000" stroke-width="2.2" opacity="0.6"/><polyline points="1172.5,572 1376.5,644 1346.5,653" fill="none" stroke="#bbb" stroke-width="1" opacity="0.5"/><polyline points="1172,570 1376,642 1346,651" fill="none" stroke="#000" stroke-width="2.2" opacity="0.6"/><polyline points="1139.5,732 1292.5,688" fill="none" stroke="#bbb" stroke-width="1" opacity="0.5"/><polyline points="1139,730 1292,686" fill="none" stroke="#000" stroke-width="2.2" opacity="0.6"/><polyline points="912.5,628 960.5,650" fill="none" stroke="#bbb" stroke-width="1" opacity="0.5"/><polyline points="912,626 960,648" fill="none" stroke="#000" stroke-width="2.2" opacity="0.6"/><polyline points="1078.5,657 1174.5,714" fill="none" stroke="#bbb" stroke-width="1" opacity="0.5"/><polyline points="1078,655 1174,712" fill="none" stroke="#000" stroke-width="2.2" opacity="0.6"/><polyline points="1038.5,522 1172.5,572" fill="none" stroke="#bbb" stroke-width="1" opacity="0.5"/><polyline points="1038,520 1172,570" fill="none" stroke="#000" stroke-width="2.2" opacity="0.6"/><polygon points="1017,236 1498,352 1494,458 1017,322" fill="url(#pWall)" stroke="#150904" stroke-width="1.6"/><polygon points="1017,236 1498,352 1494,458 1017,322" fill="url(#gWallShade)"/><clipPath id="cw"><polygon points="1017,236 1498,352 1494,458 1017,322"/></clipPath><g clip-path="url(#cw)"><ellipse cx="1120" cy="318" rx="40" ry="44" fill="#200c04" opacity="0.5" filter="url(#fb2)"/><ellipse cx="1346" cy="386" rx="44" ry="48" fill="#200c04" opacity="0.5" filter="url(#fb2)"/></g><polygon points="1017,235 1498,351 1499,355 1017,239" fill="#2a1208"/><polygon points="1494,458 1498,352 1500,354 1497,457" fill="#6a3018"/><path d="M879 545 V580 A23.5 7 0 0 0 926 580 V545 Z" fill="url(#pCyl)" stroke="#000" stroke-width="1.2"/><path d="M879 545 V580 A23.5 7 0 0 0 926 580 V545 Z" fill="url(#gCyl)"/><path d="M879 545 V580 A23.5 7 0 0 0 926 580 V545 Z" fill="url(#gCylV)"/><path d="M868 538 V544 A32 11 0 0 0 932 544 V538 Z" fill="#080808"/><ellipse cx="900" cy="538" rx="32" ry="11" fill="url(#pWash)" stroke="#000" stroke-width="1.5"/><ellipse cx="900" cy="537" rx="13.44" ry="4.95" fill="#111"/><path d="M1001 509 V543 A23.5 6 0 0 0 1048 543 V509 Z" fill="url(#pCyl)" stroke="#000" stroke-width="1.2"/><path d="M1001 509 V543 A23.5 6 0 0 0 1048 543 V509 Z" fill="url(#gCyl)"/><path d="M1001 509 V543 A23.5 6 0 0 0 1048 543 V509 Z" fill="url(#gCylV)"/><path d="M994 503 V509 A30 10.5 0 0 0 1054 509 V503 Z" fill="#080808"/><ellipse cx="1024" cy="503" rx="30" ry="10.5" fill="url(#pWash)" stroke="#000" stroke-width="1.5"/><ellipse cx="1024" cy="502" rx="12.6" ry="4.7250000000000005" fill="#111"/><rect x="891" y="428" width="17" height="106" fill="url(#pPost)" stroke="#140802" stroke-width="1"/><rect x="891" y="428" width="17" height="106" fill="url(#gPost)"/><path d="M889 526 V534 A10.5 3.5 0 0 0 910 534 V526 Z" fill="url(#pCol)" stroke="#000" stroke-width="0.8"/><path d="M889 526 V534 A10.5 3.5 0 0 0 910 534 V526 Z" fill="url(#gPost)"/><rect x="1016" y="402" width="15" height="97" fill="url(#pPost)" stroke="#140802" stroke-width="1"/><rect x="1016" y="402" width="15" height="97" fill="url(#gPost)"/><path d="M1014 491 V499 A9.5 3.5 0 0 0 1033 499 V491 Z" fill="url(#pCol)" stroke="#000" stroke-width="0.8"/><path d="M1014 491 V499 A9.5 3.5 0 0 0 1033 499 V491 Z" fill="url(#gPost)"/><polygon points="864.6,416 935,393 969,385 985,373 1082,353 1093,349 1093,289 1146,300 1146,362 1140,374 1120,384 1030,405 1015,407 1003,418 906,438 865,422" fill="#1c0c05"/><polygon points="866,419 905,433 1002,413 1002,417 905,437 866,423" fill="url(#pBarF)"/><polygon points="866,417 936,396 961,409 1001,411 905,431" fill="url(#pBarL)"/><polygon points="986,376 1082,356 1094,352 1128,362 1136,370 1120,378 1032,399 1017,400 1033,389" fill="url(#pBar)"/><polygon points="1017,401 1032,400 1120,379 1137,371 1140,374 1120,384 1030,405 1016,407" fill="url(#pBarF)"/><polygon points="969,387 985,375 1033,389 1016,400 990,390" fill="url(#pBar)"/><polygon points="969,387 985,375 1033,389 1016,400 990,390" fill="#000" opacity="0.2"/><polygon points="936,395 969,387 990,390 1016,400 961,409" fill="url(#pBar)"/><polygon points="936,395 969,387 990,390 1016,400 961,409" fill="#000" opacity="0.5"/><polygon points="961,409 1016,400 1016,406 1003,412 961,415" fill="url(#pBarF)"/><polygon points="1094,352 1128,362 1136,370 1120,378 1060,392 1060,385 1090,370" fill="#000" opacity="0.3"/><path d="M1093 289 L1146 300 L1146 352 Q1146 374 1132 380 L1110 366 Q1093 358 1093 348 Z" fill="url(#pBrk)" stroke="#150904" stroke-width="1.5"/><path d="M1093 289 L1146 300 L1146 352 Q1146 374 1132 380 L1110 366 Q1093 358 1093 348 Z" fill="#000" opacity="0.12"/><ellipse cx="1104.5" cy="308.6" rx="5.5" ry="6" fill="#080301" opacity="0.85" filter="url(#fb)"/><ellipse cx="1127" cy="314.5" rx="5.5" ry="6" fill="#080301" opacity="0.85" filter="url(#fb)"/><ellipse cx="1104.5" cy="328.7" rx="5.5" ry="6" fill="#080301" opacity="0.85" filter="url(#fb)"/><ellipse cx="1127" cy="337" rx="5.5" ry="6" fill="#080301" opacity="0.85" filter="url(#fb)"/><line x1="988" y1="376" x2="1033" y2="389" stroke="#fff" stroke-width="1.1" opacity="0.8" stroke-dasharray="2 1"/><ellipse cx="895" cy="421" rx="9" ry="4" fill="#000" opacity="0.75" transform="rotate(-14 895 421)"/><path d="M1220 592 V628 A26.0 7 0 0 0 1272 628 V592 Z" fill="url(#pCyl)" stroke="#000" stroke-width="1.2"/><path d="M1220 592 V628 A26.0 7 0 0 0 1272 628 V592 Z" fill="url(#gCyl)"/><path d="M1220 592 V628 A26.0 7 0 0 0 1272 628 V592 Z" fill="url(#gCylV)"/><path d="M1213 585 V591 A33 12 0 0 0 1279 591 V585 Z" fill="#080808"/><ellipse cx="1246" cy="585" rx="33" ry="12" fill="url(#pWash)" stroke="#000" stroke-width="1.5"/><ellipse cx="1246" cy="584" rx="13.86" ry="5.4" fill="#111"/><path d="M1093 637 V673 A26.5 8 0 0 0 1146 673 V637 Z" fill="url(#pCyl)" stroke="#000" stroke-width="1.2"/><path d="M1093 637 V673 A26.5 8 0 0 0 1146 673 V637 Z" fill="url(#gCyl)"/><path d="M1093 637 V673 A26.5 8 0 0 0 1146 673 V637 Z" fill="url(#gCylV)"/><path d="M1084 630 V637 A35 13 0 0 0 1154 637 V630 Z" fill="#080808"/><ellipse cx="1119" cy="630" rx="35" ry="13" fill="url(#pWash)" stroke="#000" stroke-width="1.5"/><ellipse cx="1119" cy="629" rx="14.7" ry="5.8500000000000005" fill="#111"/><rect x="1239" y="474" width="18" height="106" fill="url(#pPost)" stroke="#140802" stroke-width="1"/><rect x="1239" y="474" width="18" height="106" fill="url(#gPost)"/><path d="M1237 572 V580 A11.0 3.5 0 0 0 1259 580 V572 Z" fill="url(#pCol)" stroke="#000" stroke-width="0.8"/><path d="M1237 572 V580 A11.0 3.5 0 0 0 1259 580 V572 Z" fill="url(#gPost)"/><rect x="1111" y="508" width="18" height="116" fill="url(#pPost)" stroke="#140802" stroke-width="1"/><rect x="1111" y="508" width="18" height="116" fill="url(#gPost)"/><path d="M1109 616 V624 A11.0 3.5 0 0 0 1131 624 V616 Z" fill="url(#pCol)" stroke="#000" stroke-width="0.8"/><path d="M1109 616 V624 A11.0 3.5 0 0 0 1131 624 V616 Z" fill="url(#gPost)"/><polygon points="1081,494 1155,466 1191,458 1211,443 1296,420 1316,415 1316,349 1377,357 1377,425 1372,440 1352,454 1260,479 1231,490 1135,520 1087,502" fill="#1c0c05"/><polygon points="1083,497 1135,515 1231,485 1231,490 1135,519 1087,502" fill="url(#pBarF)"/><polygon points="1083,495 1156,468 1178,470 1231,483 1135,513" fill="url(#pBarO)"/><polygon points="1211,446 1296,423 1317,418 1360,430 1368,437 1352,448 1262,472 1250,474 1262,462" fill="url(#pBar)"/><polygon points="1250,475 1262,473 1352,449 1369,438 1372,440 1352,454 1260,479 1248,482" fill="url(#pBarF)"/><polygon points="1191,460 1209,446 1262,462 1249,475" fill="url(#pBarL)"/><polygon points="1156,468 1191,460 1249,475 1231,483 1178,470" fill="url(#pBar)"/><polygon points="1156,468 1191,460 1249,475 1231,483 1178,470" fill="#000" opacity="0.5"/><polygon points="1231,483 1249,476 1249,482 1231,490" fill="url(#pBarF)"/><line x1="1209" y1="446" x2="1262" y2="462" stroke="#fff" stroke-width="1.1" opacity="0.8" stroke-dasharray="2 1"/><polygon points="1317,418 1360,430 1368,437 1352,448 1290,465 1290,458 1320,440" fill="#000" opacity="0.28"/><path d="M1316 349 L1377 357 L1377 418 Q1377 440 1360 446 L1336 430 Q1316 422 1316 412 Z" fill="url(#pBrk)" stroke="#150904" stroke-width="1.5"/><path d="M1316 349 L1377 357 L1377 418 Q1377 440 1360 446 L1336 430 Q1316 422 1316 412 Z" fill="#000" opacity="0.12"/><ellipse cx="1330.6" cy="367" rx="6" ry="6.5" fill="#080301" opacity="0.85" filter="url(#fb)"/><ellipse cx="1358.6" cy="373.6" rx="6" ry="6.5" fill="#080301" opacity="0.85" filter="url(#fb)"/><ellipse cx="1330.6" cy="397" rx="6" ry="6.5" fill="#080301" opacity="0.85" filter="url(#fb)"/><ellipse cx="1358.6" cy="407" rx="6" ry="6.5" fill="#080301" opacity="0.85" filter="url(#fb)"/><ellipse cx="1112" cy="503" rx="10" ry="4.5" fill="#000" opacity="0.75" transform="rotate(-14 1112 503)"/></svg>
</body></html>
